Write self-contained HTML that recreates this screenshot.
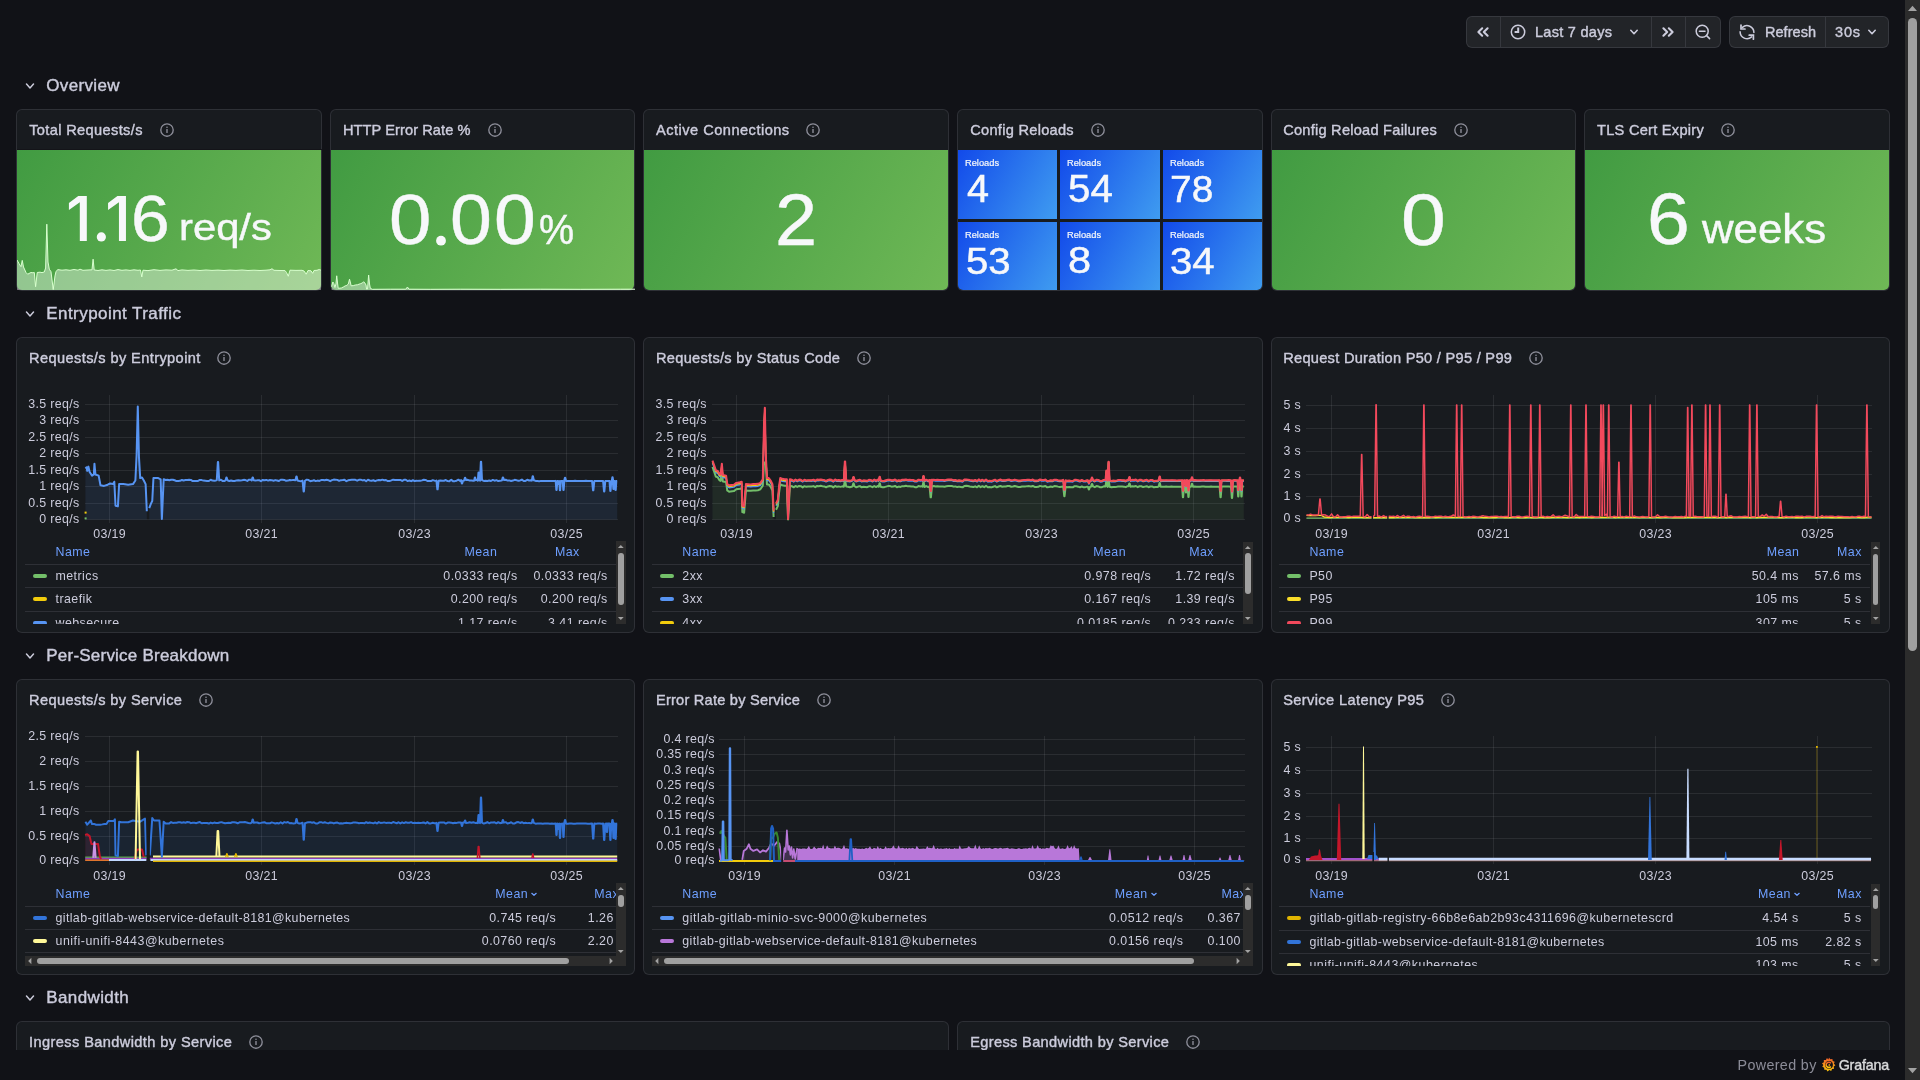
<!DOCTYPE html><html><head><meta charset="utf-8"><title>Traefik - Grafana</title><style>
*{margin:0;padding:0;box-sizing:border-box}
html,body{width:1920px;height:1080px;overflow:hidden;background:#111217}
body{position:relative;font-family:"Liberation Sans",sans-serif;color:#ccccdc}
.a{position:absolute;display:block}
.t{position:absolute;white-space:pre;line-height:1;font-family:"Liberation Sans",sans-serif;color:#ccccdc}
.md{-webkit-text-stroke:0.4px currentColor}
.pb{background:#181b1f;border:1px solid rgba(204,204,220,0.12);border-radius:6px}
.tb{background:#222428;border:1px solid rgba(204,204,220,0.12);border-radius:6px}
#dash{position:absolute;left:0;top:0;width:1905px;height:1050px;overflow:hidden;will-change:transform}
#foot{position:absolute;left:0;top:1050px;width:1905px;height:30px;will-change:transform}
</style></head><body><div id="dash"><div class="a tb" style="left:1466px;top:16px;width:255px;height:32px"></div><div class="a" style="left:1500.00px;top:17.00px;width:1.00px;height:30.00px;background:rgba(204,204,220,0.12);"></div><div class="a" style="left:1651.00px;top:17.00px;width:1.00px;height:30.00px;background:rgba(204,204,220,0.12);"></div><div class="a" style="left:1685.00px;top:17.00px;width:1.00px;height:30.00px;background:rgba(204,204,220,0.12);"></div><div class="a tb" style="left:1729px;top:16px;width:160px;height:32px"></div><div class="a" style="left:1825.00px;top:17.00px;width:1.00px;height:30.00px;background:rgba(204,204,220,0.12);"></div><svg class="a" style="left:1475.00px;top:24.00px;" width="16" height="16" viewBox="0 0 16 16"><polyline points="7.2,4.3 3.4,8 7.2,11.7" fill="none" stroke="#ccccdc" stroke-width="2.1" stroke-linecap="round" stroke-linejoin="round"/><polyline points="12.6,4.3 8.8,8 12.6,11.7" fill="none" stroke="#ccccdc" stroke-width="2.1" stroke-linecap="round" stroke-linejoin="round"/></svg><svg class="a" style="left:1509.80px;top:24.00px;" width="16" height="16" viewBox="0 0 16 16"><circle cx="8" cy="8" r="6.7" fill="none" stroke="#ccccdc" stroke-width="1.5"/><polyline points="8.2,4.6 8.2,8.1 5.6,8.1" fill="none" stroke="#ccccdc" stroke-width="2.0" stroke-linecap="square" stroke-linejoin="miter"/></svg><div class="t md" style="left:1535.00px;top:24.75px;font-size:14.5px;letter-spacing:0.285px;">Last 7 days</div><svg class="a" style="left:1626.00px;top:23.90px;" width="16" height="16" viewBox="0 0 16 16"><polyline points="4.8,6.3 8,9.7 11.2,6.3" fill="none" stroke="#ccccdc" stroke-width="1.6" stroke-linecap="round" stroke-linejoin="round"/></svg><svg class="a" style="left:1660.00px;top:24.00px;" width="16" height="16" viewBox="0 0 16 16"><polyline points="3.4,4.3 7.2,8 3.4,11.7" fill="none" stroke="#ccccdc" stroke-width="2.1" stroke-linecap="round" stroke-linejoin="round"/><polyline points="8.8,4.3 12.6,8 8.8,11.7" fill="none" stroke="#ccccdc" stroke-width="2.1" stroke-linecap="round" stroke-linejoin="round"/></svg><svg class="a" style="left:1694.50px;top:24.00px;" width="16" height="16" viewBox="0 0 16 16"><circle cx="7.2" cy="7.2" r="6.0" fill="none" stroke="#ccccdc" stroke-width="1.5"/><line x1="4.4" y1="7.2" x2="10.0" y2="7.2" stroke="#ccccdc" stroke-width="1.5" stroke-linecap="round"/><line x1="11.6" y1="11.6" x2="14.6" y2="14.6" stroke="#ccccdc" stroke-width="1.5" stroke-linecap="round"/></svg><svg class="a" style="left:1739.00px;top:24.00px;" width="16" height="16" viewBox="0 0 16 16"><path d="M3.4,3.4 A6.9,6.9 0 0 1 14.9,8.4" fill="none" stroke="#ccccdc" stroke-width="1.5" stroke-linecap="round"/><path d="M1.1,7.8 A6.9,6.9 0 0 0 12.6,12.9" fill="none" stroke="#ccccdc" stroke-width="1.5" stroke-linecap="round"/><polyline points="2.0,1.0 2.0,5.0 6.0,5.0" fill="none" stroke="#ccccdc" stroke-width="1.7" stroke-linecap="round" stroke-linejoin="miter"/><polyline points="10.2,11.2 14.4,11.2 14.4,15.2" fill="none" stroke="#ccccdc" stroke-width="1.7" stroke-linecap="round" stroke-linejoin="miter"/></svg><div class="t md" style="left:1765.00px;top:24.75px;font-size:14.5px;letter-spacing:0.039px;">Refresh</div><div class="t md" style="left:1835.00px;top:24.75px;font-size:14.5px;letter-spacing:0.813px;">30s</div><svg class="a" style="left:1864.00px;top:23.90px;" width="16" height="16" viewBox="0 0 16 16"><polyline points="4.8,6.3 8,9.7 11.2,6.3" fill="none" stroke="#ccccdc" stroke-width="1.6" stroke-linecap="round" stroke-linejoin="round"/></svg><svg class="a" style="left:22.00px;top:78.00px;" width="16" height="16" viewBox="0 0 16 16"><polyline points="4.5,6.1 8,9.9 11.5,6.1" fill="none" stroke="#ccccdc" stroke-width="1.5" stroke-linecap="round" stroke-linejoin="round"/></svg><div class="t md" style="left:46.25px;top:77.00px;font-size:17px;letter-spacing:0.337px;">Overview</div><div class="a pb" style="left:16.00px;top:109.00px;width:305.67px;height:182.00px"></div><div class="a pb" style="left:329.67px;top:109.00px;width:305.67px;height:182.00px"></div><div class="a pb" style="left:643.33px;top:109.00px;width:305.67px;height:182.00px"></div><div class="a pb" style="left:957.00px;top:109.00px;width:305.67px;height:182.00px"></div><div class="a pb" style="left:1270.67px;top:109.00px;width:305.67px;height:182.00px"></div><div class="a pb" style="left:1584.33px;top:109.00px;width:305.67px;height:182.00px"></div><div class="a" style="left:17.00px;top:150px;width:303.67px;height:140px;background:linear-gradient(120deg, #419b42, #6fb856);border-radius:0 0 5px 5px;overflow:hidden"></div><div class="a" style="left:330.67px;top:150px;width:303.67px;height:140px;background:linear-gradient(120deg, #419b42, #6fb856);border-radius:0 0 5px 5px;overflow:hidden"></div><div class="a" style="left:644.33px;top:150px;width:303.67px;height:140px;background:linear-gradient(120deg, #419b42, #6fb856);border-radius:0 0 5px 5px;overflow:hidden"></div><div class="a" style="left:1271.67px;top:150px;width:303.67px;height:140px;background:linear-gradient(120deg, #419b42, #6fb856);border-radius:0 0 5px 5px;overflow:hidden"></div><div class="a" style="left:1585.33px;top:150px;width:303.67px;height:140px;background:linear-gradient(120deg, #419b42, #6fb856);border-radius:0 0 5px 5px;overflow:hidden"></div><div class="a" style="left:17.00px;top:149.00px;width:304.67px;height:1.00px;background:#141419;"></div><svg class="a" style="left:17.00px;top:215.00px;" width="304.67" height="75" viewBox="0 0 304.67 75"><path d="M0.00,45.00 L2.00,48.50 L4.00,51.70 L5.25,45.40 L6.50,52.00 L9.00,57.50 L10.70,59.20 L12.00,58.50 L14.00,57.50 L16.00,57.80 L17.30,57.50 L18.60,71.70 L20.25,57.50 L23.00,57.20 L25.00,57.60 L27.30,57.00 L28.60,53.00 L29.80,9.20 L31.00,47.00 L32.30,54.20 L34.00,56.70 L36.25,74.60 L38.00,61.00 L39.00,56.70 L40.70,54.60 L45.00,55.20 L49.00,54.80 L53.00,55.30 L57.00,54.50 L61.00,55.20 L63.00,54.20 L66.00,55.30 L71.00,55.00 L75.00,54.80 L76.10,44.20 L77.20,55.00 L81.00,55.50 L85.00,54.80 L89.00,55.40 L93.00,54.90 L97.00,55.50 L101.00,54.60 L105.00,55.30 L109.00,54.90 L113.00,55.40 L117.00,54.80 L121.00,55.30 L123.50,55.00 L124.80,62.00 L126.00,55.20 L131.00,55.60 L137.00,54.70 L143.00,55.40 L149.00,54.90 L155.00,55.20 L159.00,53.80 L161.00,55.60 L165.00,54.90 L171.00,55.40 L177.00,55.00 L183.00,55.50 L189.00,55.00 L195.00,55.40 L201.00,55.10 L207.00,55.50 L213.00,55.10 L219.00,55.40 L225.00,55.00 L231.00,55.50 L237.00,55.20 L243.00,55.50 L249.00,55.20 L253.00,54.80 L255.00,53.75 L257.00,55.30 L263.00,55.50 L268.00,55.60 L269.50,57.50 L271.30,61.25 L273.00,55.20 L279.00,55.40 L285.00,55.30 L287.00,56.00 L289.25,59.20 L291.00,55.50 L294.00,55.80 L295.70,58.30 L297.00,55.50 L300.00,55.30 L302.20,54.50 L304.00,55.20 L304.00,75 L0.00,75 Z" fill="rgba(255,255,255,0.4)"/><path d="M0.00,45.00 L2.00,48.50 L4.00,51.70 L5.25,45.40 L6.50,52.00 L9.00,57.50 L10.70,59.20 L12.00,58.50 L14.00,57.50 L16.00,57.80 L17.30,57.50 L18.60,71.70 L20.25,57.50 L23.00,57.20 L25.00,57.60 L27.30,57.00 L28.60,53.00 L29.80,9.20 L31.00,47.00 L32.30,54.20 L34.00,56.70 L36.25,74.60 L38.00,61.00 L39.00,56.70 L40.70,54.60 L45.00,55.20 L49.00,54.80 L53.00,55.30 L57.00,54.50 L61.00,55.20 L63.00,54.20 L66.00,55.30 L71.00,55.00 L75.00,54.80 L76.10,44.20 L77.20,55.00 L81.00,55.50 L85.00,54.80 L89.00,55.40 L93.00,54.90 L97.00,55.50 L101.00,54.60 L105.00,55.30 L109.00,54.90 L113.00,55.40 L117.00,54.80 L121.00,55.30 L123.50,55.00 L124.80,62.00 L126.00,55.20 L131.00,55.60 L137.00,54.70 L143.00,55.40 L149.00,54.90 L155.00,55.20 L159.00,53.80 L161.00,55.60 L165.00,54.90 L171.00,55.40 L177.00,55.00 L183.00,55.50 L189.00,55.00 L195.00,55.40 L201.00,55.10 L207.00,55.50 L213.00,55.10 L219.00,55.40 L225.00,55.00 L231.00,55.50 L237.00,55.20 L243.00,55.50 L249.00,55.20 L253.00,54.80 L255.00,53.75 L257.00,55.30 L263.00,55.50 L268.00,55.60 L269.50,57.50 L271.30,61.25 L273.00,55.20 L279.00,55.40 L285.00,55.30 L287.00,56.00 L289.25,59.20 L291.00,55.50 L294.00,55.80 L295.70,58.30 L297.00,55.50 L300.00,55.30 L302.20,54.50 L304.00,55.20" fill="none" stroke="#d9ffcf" stroke-width="1" stroke-linejoin="round"/></svg><svg class="a" style="left:330.67px;top:260.00px;" width="304.67" height="30" viewBox="0 0 304.67 30"><path d="M0.58,26.70 L1.83,22.00 L2.83,23.50 L3.93,27.50 L4.93,24.00 L5.73,15.80 L6.53,23.00 L7.23,28.30 L10.33,28.00 L12.33,27.00 L14.33,25.80 L15.83,25.40 L17.33,24.00 L18.53,19.20 L19.53,23.00 L20.13,25.80 L22.33,25.60 L24.33,25.00 L26.33,24.80 L29.33,23.75 L31.33,23.00 L32.63,21.70 L33.83,23.00 L35.03,25.00 L35.58,29.20 L36.53,29.00 L37.63,15.00 L38.53,24.00 L39.33,28.30 L41.33,29.30 L59.33,29.20 L74.83,29.20 L76.43,27.00 L78.03,29.20 L99.33,29.30 L129.33,29.20 L169.33,29.30 L209.33,29.20 L249.33,29.30 L289.33,29.20 L304.33,29.20 L304.33,30 L0.58,30 Z" fill="rgba(255,255,255,0.4)"/><path d="M0.58,26.70 L1.83,22.00 L2.83,23.50 L3.93,27.50 L4.93,24.00 L5.73,15.80 L6.53,23.00 L7.23,28.30 L10.33,28.00 L12.33,27.00 L14.33,25.80 L15.83,25.40 L17.33,24.00 L18.53,19.20 L19.53,23.00 L20.13,25.80 L22.33,25.60 L24.33,25.00 L26.33,24.80 L29.33,23.75 L31.33,23.00 L32.63,21.70 L33.83,23.00 L35.03,25.00 L35.58,29.20 L36.53,29.00 L37.63,15.00 L38.53,24.00 L39.33,28.30 L41.33,29.30 L59.33,29.20 L74.83,29.20 L76.43,27.00 L78.03,29.20 L99.33,29.30 L129.33,29.20 L169.33,29.30 L209.33,29.20 L249.33,29.30 L289.33,29.20 L304.33,29.20" fill="none" stroke="#d9ffcf" stroke-width="1" stroke-linejoin="round"/></svg><div class="t md" style="left:29.20px;top:122.70px;font-size:14.6px;letter-spacing:0.357px;">Total Requests/s</div><svg class="a" style="left:159.00px;top:121.80px;" width="16" height="16" viewBox="0 0 16 16"><circle cx="8" cy="8" r="6.2" fill="none" stroke="rgba(204,204,220,0.65)" stroke-width="1.35"/><rect x="7.3" y="7.0" width="1.4" height="4.0" rx="0.6" fill="rgba(204,204,220,0.65)"/><circle cx="8" cy="5.2" r="0.8" fill="rgba(204,204,220,0.65)"/></svg><div class="t md" style="left:343.00px;top:122.70px;font-size:14.6px;letter-spacing:0.076px;">HTTP Error Rate %</div><svg class="a" style="left:487.00px;top:121.80px;" width="16" height="16" viewBox="0 0 16 16"><circle cx="8" cy="8" r="6.2" fill="none" stroke="rgba(204,204,220,0.65)" stroke-width="1.35"/><rect x="7.3" y="7.0" width="1.4" height="4.0" rx="0.6" fill="rgba(204,204,220,0.65)"/><circle cx="8" cy="5.2" r="0.8" fill="rgba(204,204,220,0.65)"/></svg><div class="t md" style="left:656.00px;top:122.70px;font-size:14.6px;letter-spacing:0.484px;">Active Connections</div><svg class="a" style="left:805.00px;top:121.80px;" width="16" height="16" viewBox="0 0 16 16"><circle cx="8" cy="8" r="6.2" fill="none" stroke="rgba(204,204,220,0.65)" stroke-width="1.35"/><rect x="7.3" y="7.0" width="1.4" height="4.0" rx="0.6" fill="rgba(204,204,220,0.65)"/><circle cx="8" cy="5.2" r="0.8" fill="rgba(204,204,220,0.65)"/></svg><div class="t md" style="left:970.20px;top:122.70px;font-size:14.6px;letter-spacing:0.283px;">Config Reloads</div><svg class="a" style="left:1090.00px;top:121.80px;" width="16" height="16" viewBox="0 0 16 16"><circle cx="8" cy="8" r="6.2" fill="none" stroke="rgba(204,204,220,0.65)" stroke-width="1.35"/><rect x="7.3" y="7.0" width="1.4" height="4.0" rx="0.6" fill="rgba(204,204,220,0.65)"/><circle cx="8" cy="5.2" r="0.8" fill="rgba(204,204,220,0.65)"/></svg><div class="t md" style="left:1283.20px;top:122.70px;font-size:14.6px;letter-spacing:0.242px;">Config Reload Failures</div><svg class="a" style="left:1453.00px;top:121.80px;" width="16" height="16" viewBox="0 0 16 16"><circle cx="8" cy="8" r="6.2" fill="none" stroke="rgba(204,204,220,0.65)" stroke-width="1.35"/><rect x="7.3" y="7.0" width="1.4" height="4.0" rx="0.6" fill="rgba(204,204,220,0.65)"/><circle cx="8" cy="5.2" r="0.8" fill="rgba(204,204,220,0.65)"/></svg><div class="t md" style="left:1597.00px;top:122.70px;font-size:14.6px;letter-spacing:0.269px;">TLS Cert Expiry</div><svg class="a" style="left:1720.00px;top:121.80px;" width="16" height="16" viewBox="0 0 16 16"><circle cx="8" cy="8" r="6.2" fill="none" stroke="rgba(204,204,220,0.65)" stroke-width="1.35"/><rect x="7.3" y="7.0" width="1.4" height="4.0" rx="0.6" fill="rgba(204,204,220,0.65)"/><circle cx="8" cy="5.2" r="0.8" fill="rgba(204,204,220,0.65)"/></svg><svg class="a" style="left:64.00px;top:190.00px;" width="70" height="56" viewBox="0 0 70 56"><polygon points="14.260000000000005,5.960000000000008 22.810000000000002,5.960000000000008 22.810000000000002,51.06 15.810000000000002,51.06 15.810000000000002,12.180000000000007 4.920000000000002,19.960000000000008 4.920000000000002,12.960000000000008" fill="#f7f8fa"/><polygon points="53.400000000000006,5.960000000000008 61.95,5.960000000000008 61.95,51.06 54.95,51.06 54.95,12.180000000000007 44.06,19.960000000000008 44.06,12.960000000000008" fill="#f7f8fa"/><circle cx="37.33" cy="46.9" r="4.6" fill="#f7f8fa"/></svg><div class="t" style="left:130.97px;top:185.82px;font-size:65.35px;color:#f7f8fa;transform:scaleX(1.0639);transform-origin:0 0;-webkit-text-stroke:0.45px #f7f8fa;">6</div><div class="t" style="left:178.93px;top:208.53px;font-size:37.22px;color:#f7f8fa;transform:scaleX(1.1221);transform-origin:0 0;-webkit-text-stroke:0.45px #f7f8fa;">req/s</div><div class="t" style="left:389.35px;top:185.19px;font-size:70.42px;color:#f7f8fa;transform:scaleX(1.0815);transform-origin:0 0;-webkit-text-stroke:0.45px #f7f8fa;">0</div><div class="t" style="left:450.28px;top:185.19px;font-size:70.42px;color:#f7f8fa;transform:scaleX(1.0682);transform-origin:0 0;-webkit-text-stroke:0.45px #f7f8fa;">0</div><div class="t" style="left:494.09px;top:185.19px;font-size:70.42px;color:#f7f8fa;transform:scaleX(1.0652);transform-origin:0 0;-webkit-text-stroke:0.45px #f7f8fa;">0</div><svg class="a" style="left:430.00px;top:230.00px;" width="20" height="20" viewBox="0 0 20 20"><circle cx="11" cy="10.7" r="4.9" fill="#f7f8fa"/></svg><div class="t" style="left:539.30px;top:208.33px;font-size:43.26px;color:#f7f8fa;transform:scaleX(0.9127);transform-origin:0 0;-webkit-text-stroke:0.45px #f7f8fa;">%</div><div class="t" style="left:775.40px;top:184.36px;font-size:72.71px;color:#f7f8fa;transform:scaleX(1.0408);transform-origin:0 0;-webkit-text-stroke:0.45px #f7f8fa;">2</div><div class="t" style="left:1400.58px;top:183.98px;font-size:72.54px;color:#f7f8fa;transform:scaleX(1.1091);transform-origin:0 0;-webkit-text-stroke:0.45px #f7f8fa;">0</div><div class="t" style="left:1646.70px;top:183.04px;font-size:72.11px;color:#f7f8fa;transform:scaleX(1.0663);transform-origin:0 0;-webkit-text-stroke:0.45px #f7f8fa;">6</div><div class="t" style="left:1702.25px;top:208.84px;font-size:41.36px;color:#f7f8fa;transform:scaleX(1.0586);transform-origin:0 0;-webkit-text-stroke:0.45px #f7f8fa;">weeks</div><div class="a" style="left:958.00px;top:150.00px;width:99.00px;height:69.00px;background:linear-gradient(120deg, #124aea, #3f9cf0);"></div><div class="t" style="left:965.24px;top:157.61px;font-size:9.89px;color:#f7f8fa;transform:scaleX(0.9392);transform-origin:0 0;-webkit-text-stroke:0.2px #f7f8fa;">Reloads</div><div class="t" style="left:966.70px;top:170.05px;font-size:38.39px;color:#f7f8fa;transform:scaleX(1.0324);transform-origin:0 0;-webkit-text-stroke:0.5px #f7f8fa;">4</div><div class="a" style="left:1060.20px;top:150.00px;width:99.60px;height:69.00px;background:linear-gradient(120deg, #124aea, #3f9cf0);"></div><div class="t" style="left:1067.44px;top:157.61px;font-size:9.89px;color:#f7f8fa;transform:scaleX(0.9392);transform-origin:0 0;-webkit-text-stroke:0.2px #f7f8fa;">Reloads</div><div class="t" style="left:1068.34px;top:170.11px;font-size:38.00px;color:#f7f8fa;transform:scaleX(1.0606);transform-origin:0 0;-webkit-text-stroke:0.5px #f7f8fa;">54</div><div class="a" style="left:1163.00px;top:150.00px;width:99.00px;height:69.00px;background:linear-gradient(120deg, #124aea, #3f9cf0);"></div><div class="t" style="left:1170.24px;top:157.61px;font-size:9.89px;color:#f7f8fa;transform:scaleX(0.9392);transform-origin:0 0;-webkit-text-stroke:0.2px #f7f8fa;">Reloads</div><div class="t" style="left:1169.91px;top:170.64px;font-size:37.38px;color:#f7f8fa;transform:scaleX(1.0406);transform-origin:0 0;-webkit-text-stroke:0.5px #f7f8fa;">78</div><div class="a" style="left:958.00px;top:222.00px;width:99.00px;height:68.00px;background:linear-gradient(120deg, #124aea, #3f9cf0);border-radius:0 0 0 5px;"></div><div class="t" style="left:965.24px;top:229.61px;font-size:9.89px;color:#f7f8fa;transform:scaleX(0.9392);transform-origin:0 0;-webkit-text-stroke:0.2px #f7f8fa;">Reloads</div><div class="t" style="left:965.94px;top:242.73px;font-size:37.04px;color:#f7f8fa;transform:scaleX(1.0854);transform-origin:0 0;-webkit-text-stroke:0.5px #f7f8fa;">53</div><div class="a" style="left:1060.20px;top:222.00px;width:99.60px;height:68.00px;background:linear-gradient(120deg, #124aea, #3f9cf0);"></div><div class="t" style="left:1067.44px;top:229.61px;font-size:9.89px;color:#f7f8fa;transform:scaleX(0.9392);transform-origin:0 0;-webkit-text-stroke:0.2px #f7f8fa;">Reloads</div><div class="t" style="left:1067.60px;top:242.80px;font-size:36.96px;color:#f7f8fa;transform:scaleX(1.1232);transform-origin:0 0;-webkit-text-stroke:0.5px #f7f8fa;">8</div><div class="a" style="left:1163.00px;top:222.00px;width:99.00px;height:68.00px;background:linear-gradient(120deg, #124aea, #3f9cf0);border-radius:0 0 5px 0;"></div><div class="t" style="left:1170.24px;top:229.61px;font-size:9.89px;color:#f7f8fa;transform:scaleX(0.9392);transform-origin:0 0;-webkit-text-stroke:0.2px #f7f8fa;">Reloads</div><div class="t" style="left:1170.44px;top:242.73px;font-size:37.04px;color:#f7f8fa;transform:scaleX(1.0830);transform-origin:0 0;-webkit-text-stroke:0.5px #f7f8fa;">34</div><svg class="a" style="left:22.00px;top:306.00px;" width="16" height="16" viewBox="0 0 16 16"><polyline points="4.5,6.1 8,9.9 11.5,6.1" fill="none" stroke="#ccccdc" stroke-width="1.5" stroke-linecap="round" stroke-linejoin="round"/></svg><div class="t md" style="left:46.25px;top:305.00px;font-size:17px;letter-spacing:0.441px;">Entrypoint Traffic</div><svg class="a" style="left:22.00px;top:648.00px;" width="16" height="16" viewBox="0 0 16 16"><polyline points="4.5,6.1 8,9.9 11.5,6.1" fill="none" stroke="#ccccdc" stroke-width="1.5" stroke-linecap="round" stroke-linejoin="round"/></svg><div class="t md" style="left:46.25px;top:647.00px;font-size:17px;letter-spacing:0.224px;">Per-Service Breakdown</div><svg class="a" style="left:22.00px;top:990.00px;" width="16" height="16" viewBox="0 0 16 16"><polyline points="4.5,6.1 8,9.9 11.5,6.1" fill="none" stroke="#ccccdc" stroke-width="1.5" stroke-linecap="round" stroke-linejoin="round"/></svg><div class="t md" style="left:46.25px;top:989.00px;font-size:17px;letter-spacing:0.389px;">Bandwidth</div><div class="a pb" style="left:16.00px;top:337.00px;width:619.33px;height:296.00px"></div><div class="a pb" style="left:643.33px;top:337.00px;width:619.33px;height:296.00px"></div><div class="a pb" style="left:1270.67px;top:337.00px;width:619.33px;height:296.00px"></div><div class="a pb" style="left:16.00px;top:679.00px;width:619.33px;height:296.00px"></div><div class="a pb" style="left:643.33px;top:679.00px;width:619.33px;height:296.00px"></div><div class="a pb" style="left:1270.67px;top:679.00px;width:619.33px;height:296.00px"></div><div class="a pb" style="left:16.00px;top:1021.00px;width:933.00px;height:296.00px"></div><div class="a pb" style="left:957.00px;top:1021.00px;width:933.00px;height:296.00px"></div><div class="a" style="left:85.20px;top:519.00px;width:533.00px;height:1.00px;background:rgba(204,204,220,0.1);"></div><div class="a" style="left:85.20px;top:503.00px;width:533.00px;height:1.00px;background:rgba(204,204,220,0.1);"></div><div class="a" style="left:85.20px;top:486.00px;width:533.00px;height:1.00px;background:rgba(204,204,220,0.1);"></div><div class="a" style="left:85.20px;top:470.00px;width:533.00px;height:1.00px;background:rgba(204,204,220,0.1);"></div><div class="a" style="left:85.20px;top:453.00px;width:533.00px;height:1.00px;background:rgba(204,204,220,0.1);"></div><div class="a" style="left:85.20px;top:437.00px;width:533.00px;height:1.00px;background:rgba(204,204,220,0.1);"></div><div class="a" style="left:85.20px;top:420.00px;width:533.00px;height:1.00px;background:rgba(204,204,220,0.1);"></div><div class="a" style="left:85.20px;top:404.00px;width:533.00px;height:1.00px;background:rgba(204,204,220,0.1);"></div><div class="a" style="left:109.00px;top:394.70px;width:1.00px;height:128.30px;background:rgba(204,204,220,0.1);"></div><div class="a" style="left:261.00px;top:394.70px;width:1.00px;height:128.30px;background:rgba(204,204,220,0.1);"></div><div class="a" style="left:414.00px;top:394.70px;width:1.00px;height:128.30px;background:rgba(204,204,220,0.1);"></div><div class="a" style="left:566.00px;top:394.70px;width:1.00px;height:128.30px;background:rgba(204,204,220,0.1);"></div><div class="t" style="left:39.29px;top:512.80px;font-size:12.4px;letter-spacing:0.350px;">0 req/s</div><div class="t" style="left:28.25px;top:496.80px;font-size:12.4px;letter-spacing:0.350px;">0.5 req/s</div><div class="t" style="left:39.29px;top:479.80px;font-size:12.4px;letter-spacing:0.350px;">1 req/s</div><div class="t" style="left:28.25px;top:463.80px;font-size:12.4px;letter-spacing:0.350px;">1.5 req/s</div><div class="t" style="left:39.29px;top:446.80px;font-size:12.4px;letter-spacing:0.350px;">2 req/s</div><div class="t" style="left:28.25px;top:430.80px;font-size:12.4px;letter-spacing:0.350px;">2.5 req/s</div><div class="t" style="left:39.29px;top:413.80px;font-size:12.4px;letter-spacing:0.350px;">3 req/s</div><div class="t" style="left:28.25px;top:397.80px;font-size:12.4px;letter-spacing:0.350px;">3.5 req/s</div><div class="t" style="left:93.29px;top:528.00px;font-size:12.4px;letter-spacing:0.350px;">03/19</div><div class="t" style="left:245.29px;top:528.00px;font-size:12.4px;letter-spacing:0.350px;">03/21</div><div class="t" style="left:398.29px;top:528.00px;font-size:12.4px;letter-spacing:0.350px;">03/23</div><div class="t" style="left:550.29px;top:528.00px;font-size:12.4px;letter-spacing:0.350px;">03/25</div><svg class="a" style="left:80.00px;top:390.00px;" width="545.00" height="135.00" viewBox="80.00 390.00 545.00 135.00"><path d="M85.42,468.44 L86.62,467.24 L87.22,470.85 L88.43,466.63 L89.63,472.05 L92.04,475.66 L93.85,474.46 L94.45,463.63 L95.41,474.46 L98.66,475.66 L100.47,485.30 L104.08,485.90 L107.69,484.69 L110.10,483.49 L113.11,484.09 L114.31,481.68 L115.52,505.76 L117.92,506.37 L119.13,484.09 L123.34,484.09 L128.16,484.69 L132.97,484.09 L135.38,480.48 L136.59,455.20 L137.79,406.44 L138.99,457.61 L140.20,478.07 L142.00,477.47 L143.81,480.48 L145.62,484.09 L146.82,511.18 L146.82,519.40 L85.42,519.40 Z" fill="#5794F2" fill-opacity="0.1"/><path d="M149.23,508.17 L151.03,503.36 L152.24,500.95 L153.44,478.07 L158.26,478.07 L160.66,479.28 L161.87,519.01 L163.67,479.28 L165.67,479.98 L167.47,479.77 L169.27,480.23 L171.07,479.85 L172.87,479.71 L174.67,480.24 L176.47,481.07 L178.27,480.88 L180.07,480.82 L181.87,479.96 L183.67,480.46 L185.47,480.04 L187.27,479.88 L189.07,479.77 L190.87,479.94 L192.67,481.08 L194.47,480.93 L196.27,480.89 L198.07,480.88 L199.87,479.91 L201.67,480.10 L203.47,480.60 L205.27,480.77 L207.07,480.97 L208.87,481.01 L210.67,479.74 L212.47,480.57 L214.27,480.67 L216.07,480.41 L216.80,480.14 L217.85,462.00 L218.15,462.00 L219.20,480.38 L221.00,479.74 L222.80,481.10 L224.60,480.98 L225.50,480.44 L226.35,477.50 L226.65,477.50 L227.50,480.24 L229.30,481.05 L231.10,480.52 L232.90,481.01 L234.70,480.96 L236.50,480.41 L238.30,480.26 L240.10,480.56 L241.90,480.29 L243.70,479.86 L245.50,480.09 L247.30,480.90 L249.10,479.67 L250.90,479.67 L251.70,480.50 L252.55,477.40 L252.85,477.40 L253.70,480.22 L255.50,480.46 L257.30,480.35 L259.10,480.15 L260.90,481.20 L262.70,479.91 L264.50,480.26 L266.30,479.92 L268.10,480.61 L269.90,480.04 L271.70,480.17 L273.50,480.80 L275.30,480.11 L277.10,480.49 L278.90,481.05 L280.70,479.76 L282.50,479.70 L284.30,479.97 L286.10,480.82 L287.90,480.58 L289.70,479.98 L291.50,480.13 L293.30,479.88 L295.10,480.33 L295.50,480.03 L296.35,476.50 L296.65,476.50 L297.50,480.56 L299.30,481.03 L301.10,481.13 L302.55,480.59 L303.60,491.50 L303.90,491.50 L304.95,480.77 L306.75,479.63 L308.55,480.06 L310.35,481.15 L312.15,480.84 L313.95,480.26 L315.75,481.11 L317.55,480.59 L319.35,480.91 L321.15,480.07 L322.95,479.91 L324.75,480.31 L326.55,479.82 L328.35,480.21 L330.15,481.14 L331.95,480.13 L333.75,479.62 L335.55,479.67 L337.35,479.87 L339.15,480.85 L340.95,480.18 L342.75,480.06 L344.55,479.76 L346.35,481.17 L348.15,480.28 L349.95,479.93 L351.75,479.69 L353.55,479.69 L355.35,479.87 L357.15,480.68 L358.95,479.84 L360.75,479.67 L362.55,480.39 L364.35,480.00 L366.15,481.20 L367.95,479.80 L369.75,480.45 L371.55,480.84 L373.35,480.25 L375.15,481.18 L376.95,480.36 L378.75,479.99 L380.55,480.26 L382.35,479.66 L384.15,480.27 L385.95,480.00 L387.75,481.02 L389.55,480.93 L391.35,480.40 L393.15,479.65 L394.95,480.01 L396.75,479.99 L398.55,479.93 L400.35,479.97 L402.15,480.99 L403.95,479.83 L405.75,479.68 L407.55,481.08 L409.35,480.50 L411.15,481.18 L412.95,480.24 L414.75,481.04 L416.55,480.65 L418.35,480.87 L420.15,480.79 L421.95,480.39 L423.75,479.75 L425.55,479.94 L427.35,481.00 L429.15,481.04 L430.95,481.08 L432.75,480.14 L434.55,480.65 L436.35,480.88 L436.40,480.51 L437.35,489.30 L437.65,489.30 L438.60,480.65 L440.40,480.44 L442.20,480.65 L444.00,480.70 L445.80,480.03 L447.60,481.08 L449.40,481.13 L451.20,479.72 L453.00,481.15 L454.80,481.14 L456.60,480.67 L458.40,479.67 L460.20,481.04 L461.00,480.10 L461.85,483.50 L462.15,483.50 L463.00,480.77 L464.10,480.53 L464.95,477.80 L465.25,477.80 L466.10,480.05 L467.90,479.87 L469.70,480.62 L471.50,480.51 L473.30,480.79 L474.10,480.74 L474.85,477.60 L475.15,477.60 L475.90,480.17 L477.70,479.61 L477.80,480.74 L478.45,472.60 L478.75,472.60 L479.40,480.01 L480.00,480.70 L480.85,461.70 L481.15,461.70 L482.00,480.09 L483.80,480.90 L485.60,480.85 L487.40,481.00 L489.20,480.48 L491.00,481.01 L492.80,479.92 L494.60,480.67 L496.40,480.13 L498.20,481.03 L500.00,480.84 L501.80,480.35 L501.90,480.42 L502.75,477.40 L503.05,477.40 L503.90,480.02 L505.70,479.65 L507.50,480.55 L509.30,480.38 L511.10,480.98 L512.90,480.57 L514.70,479.82 L516.50,480.18 L518.30,480.83 L520.10,480.44 L521.90,479.62 L523.70,480.94 L525.50,480.92 L527.30,479.74 L529.10,480.47 L530.90,480.21 L531.80,480.63 L532.65,476.25 L532.95,476.25 L533.80,480.25 L535.60,480.92 L537.40,481.00 L539.20,481.14 L541.00,480.88 L542.80,480.88 L544.60,481.04 L546.40,481.12 L548.20,481.00 L550.00,480.98 L551.80,481.11 L553.60,481.08 L555.40,480.87 L555.70,481.06 L556.35,490.00 L556.65,490.00 L557.30,480.95 L557.90,480.97 L558.45,484.00 L558.75,484.00 L559.30,481.05 L559.20,480.99 L559.85,490.30 L560.15,490.30 L560.80,481.04 L562.60,480.90 L562.70,481.06 L563.35,490.00 L563.65,490.00 L564.30,480.95 L564.10,480.95 L564.95,477.80 L565.25,477.80 L566.10,481.00 L567.90,480.95 L569.70,481.01 L571.50,481.12 L573.30,481.06 L575.10,480.85 L576.90,480.94 L578.70,481.01 L580.50,481.00 L582.30,481.06 L584.10,481.00 L585.90,480.87 L587.70,480.92 L589.50,481.10 L591.30,480.96 L592.10,481.04 L593.05,490.30 L593.35,490.30 L594.30,481.07 L596.10,481.04 L597.90,481.05 L599.70,481.03 L601.50,480.94 L603.10,481.06 L604.05,491.40 L604.35,491.40 L605.30,481.00 L607.10,481.12 L608.90,480.94 L609.50,481.06 L610.25,491.00 L610.55,491.00 L611.30,481.04 L611.80,481.02 L612.35,477.30 L612.65,477.30 L613.20,480.99 L612.80,480.95 L613.35,489.00 L613.65,489.00 L614.20,481.04 L614.90,480.98 L615.45,490.00 L615.75,490.00 L616.30,481.02 L617.20,481.00 L617.20,519.40 L149.23,519.40 Z" fill="#5794F2" fill-opacity="0.1"/><polyline points="85.42,468.44 86.62,467.24 87.22,470.85 88.43,466.63 89.63,472.05 92.04,475.66 93.85,474.46 94.45,463.63 95.41,474.46 98.66,475.66 100.47,485.30 104.08,485.90 107.69,484.69 110.10,483.49 113.11,484.09 114.31,481.68 115.52,505.76 117.92,506.37 119.13,484.09 123.34,484.09 128.16,484.69 132.97,484.09 135.38,480.48 136.59,455.20 137.79,406.44 138.99,457.61 140.20,478.07 142.00,477.47 143.81,480.48 145.62,484.09 146.82,511.18" fill="none" stroke="#5794F2" stroke-width="2.0" stroke-linejoin="round" stroke-opacity="1.0"/><polyline points="149.23,508.17 151.03,503.36 152.24,500.95 153.44,478.07 158.26,478.07 160.66,479.28 161.87,519.01 163.67,479.28 165.67,479.98 167.47,479.77 169.27,480.23 171.07,479.85 172.87,479.71 174.67,480.24 176.47,481.07 178.27,480.88 180.07,480.82 181.87,479.96 183.67,480.46 185.47,480.04 187.27,479.88 189.07,479.77 190.87,479.94 192.67,481.08 194.47,480.93 196.27,480.89 198.07,480.88 199.87,479.91 201.67,480.10 203.47,480.60 205.27,480.77 207.07,480.97 208.87,481.01 210.67,479.74 212.47,480.57 214.27,480.67 216.07,480.41 216.80,480.14 217.85,462.00 218.15,462.00 219.20,480.38 221.00,479.74 222.80,481.10 224.60,480.98 225.50,480.44 226.35,477.50 226.65,477.50 227.50,480.24 229.30,481.05 231.10,480.52 232.90,481.01 234.70,480.96 236.50,480.41 238.30,480.26 240.10,480.56 241.90,480.29 243.70,479.86 245.50,480.09 247.30,480.90 249.10,479.67 250.90,479.67 251.70,480.50 252.55,477.40 252.85,477.40 253.70,480.22 255.50,480.46 257.30,480.35 259.10,480.15 260.90,481.20 262.70,479.91 264.50,480.26 266.30,479.92 268.10,480.61 269.90,480.04 271.70,480.17 273.50,480.80 275.30,480.11 277.10,480.49 278.90,481.05 280.70,479.76 282.50,479.70 284.30,479.97 286.10,480.82 287.90,480.58 289.70,479.98 291.50,480.13 293.30,479.88 295.10,480.33 295.50,480.03 296.35,476.50 296.65,476.50 297.50,480.56 299.30,481.03 301.10,481.13 302.55,480.59 303.60,491.50 303.90,491.50 304.95,480.77 306.75,479.63 308.55,480.06 310.35,481.15 312.15,480.84 313.95,480.26 315.75,481.11 317.55,480.59 319.35,480.91 321.15,480.07 322.95,479.91 324.75,480.31 326.55,479.82 328.35,480.21 330.15,481.14 331.95,480.13 333.75,479.62 335.55,479.67 337.35,479.87 339.15,480.85 340.95,480.18 342.75,480.06 344.55,479.76 346.35,481.17 348.15,480.28 349.95,479.93 351.75,479.69 353.55,479.69 355.35,479.87 357.15,480.68 358.95,479.84 360.75,479.67 362.55,480.39 364.35,480.00 366.15,481.20 367.95,479.80 369.75,480.45 371.55,480.84 373.35,480.25 375.15,481.18 376.95,480.36 378.75,479.99 380.55,480.26 382.35,479.66 384.15,480.27 385.95,480.00 387.75,481.02 389.55,480.93 391.35,480.40 393.15,479.65 394.95,480.01 396.75,479.99 398.55,479.93 400.35,479.97 402.15,480.99 403.95,479.83 405.75,479.68 407.55,481.08 409.35,480.50 411.15,481.18 412.95,480.24 414.75,481.04 416.55,480.65 418.35,480.87 420.15,480.79 421.95,480.39 423.75,479.75 425.55,479.94 427.35,481.00 429.15,481.04 430.95,481.08 432.75,480.14 434.55,480.65 436.35,480.88 436.40,480.51 437.35,489.30 437.65,489.30 438.60,480.65 440.40,480.44 442.20,480.65 444.00,480.70 445.80,480.03 447.60,481.08 449.40,481.13 451.20,479.72 453.00,481.15 454.80,481.14 456.60,480.67 458.40,479.67 460.20,481.04 461.00,480.10 461.85,483.50 462.15,483.50 463.00,480.77 464.10,480.53 464.95,477.80 465.25,477.80 466.10,480.05 467.90,479.87 469.70,480.62 471.50,480.51 473.30,480.79 474.10,480.74 474.85,477.60 475.15,477.60 475.90,480.17 477.70,479.61 477.80,480.74 478.45,472.60 478.75,472.60 479.40,480.01 480.00,480.70 480.85,461.70 481.15,461.70 482.00,480.09 483.80,480.90 485.60,480.85 487.40,481.00 489.20,480.48 491.00,481.01 492.80,479.92 494.60,480.67 496.40,480.13 498.20,481.03 500.00,480.84 501.80,480.35 501.90,480.42 502.75,477.40 503.05,477.40 503.90,480.02 505.70,479.65 507.50,480.55 509.30,480.38 511.10,480.98 512.90,480.57 514.70,479.82 516.50,480.18 518.30,480.83 520.10,480.44 521.90,479.62 523.70,480.94 525.50,480.92 527.30,479.74 529.10,480.47 530.90,480.21 531.80,480.63 532.65,476.25 532.95,476.25 533.80,480.25 535.60,480.92 537.40,481.00 539.20,481.14 541.00,480.88 542.80,480.88 544.60,481.04 546.40,481.12 548.20,481.00 550.00,480.98 551.80,481.11 553.60,481.08 555.40,480.87 555.70,481.06 556.35,490.00 556.65,490.00 557.30,480.95 557.90,480.97 558.45,484.00 558.75,484.00 559.30,481.05 559.20,480.99 559.85,490.30 560.15,490.30 560.80,481.04 562.60,480.90 562.70,481.06 563.35,490.00 563.65,490.00 564.30,480.95 564.10,480.95 564.95,477.80 565.25,477.80 566.10,481.00 567.90,480.95 569.70,481.01 571.50,481.12 573.30,481.06 575.10,480.85 576.90,480.94 578.70,481.01 580.50,481.00 582.30,481.06 584.10,481.00 585.90,480.87 587.70,480.92 589.50,481.10 591.30,480.96 592.10,481.04 593.05,490.30 593.35,490.30 594.30,481.07 596.10,481.04 597.90,481.05 599.70,481.03 601.50,480.94 603.10,481.06 604.05,491.40 604.35,491.40 605.30,481.00 607.10,481.12 608.90,480.94 609.50,481.06 610.25,491.00 610.55,491.00 611.30,481.04 611.80,481.02 612.35,477.30 612.65,477.30 613.20,480.99 612.80,480.95 613.35,489.00 613.65,489.00 614.20,481.04 614.90,480.98 615.45,490.00 615.75,490.00 616.30,481.02 617.20,481.00" fill="none" stroke="#5794F2" stroke-width="2.0" stroke-linejoin="round" stroke-opacity="1.0"/><rect x="84.6" y="511.6" width="2" height="2" fill="#F2CC0C"/><rect x="84.6" y="517.4" width="2" height="2" fill="#73BF69"/></svg><div class="a" style="left:17.00px;top:540.00px;width:599.00px;height:84.00px;overflow:hidden"><div class="t" style="left:38.50px;top:5.80px;font-size:12.4px;letter-spacing:0.450px;color:#6e9fff;">Name</div><div class="t" style="left:447.44px;top:5.80px;font-size:12.4px;letter-spacing:0.450px;color:#6e9fff;">Mean</div><div class="t" style="left:537.98px;top:5.80px;font-size:12.4px;letter-spacing:0.450px;color:#6e9fff;">Max</div><div class="a" style="left:8.20px;top:23.50px;width:590.80px;height:1.00px;background:rgba(204,204,220,0.12);"></div><div class="a" style="left:15.80px;top:33.80px;width:14.20px;height:4.00px;background:#73BF69;border-radius:2px;"></div><div class="t" style="left:38.50px;top:29.60px;font-size:12.4px;letter-spacing:0.450px;">metrics</div><div class="t" style="left:426.31px;top:29.60px;font-size:12.4px;letter-spacing:0.450px;">0.0333 req/s</div><div class="t" style="left:516.41px;top:29.60px;font-size:12.4px;letter-spacing:0.450px;">0.0333 req/s</div><div class="a" style="left:8.20px;top:47.00px;width:590.80px;height:1.00px;background:rgba(204,204,220,0.12);"></div><div class="a" style="left:15.80px;top:57.30px;width:14.20px;height:4.00px;background:#F2CC0C;border-radius:2px;"></div><div class="t" style="left:38.50px;top:53.10px;font-size:12.4px;letter-spacing:0.450px;">traefik</div><div class="t" style="left:433.66px;top:53.10px;font-size:12.4px;letter-spacing:0.450px;">0.200 req/s</div><div class="t" style="left:523.76px;top:53.10px;font-size:12.4px;letter-spacing:0.450px;">0.200 req/s</div><div class="a" style="left:8.20px;top:70.50px;width:590.80px;height:1.00px;background:rgba(204,204,220,0.12);"></div><div class="a" style="left:15.80px;top:80.80px;width:14.20px;height:4.00px;background:#5794F2;border-radius:2px;"></div><div class="t" style="left:38.52px;top:76.60px;font-size:12.4px;letter-spacing:0.450px;">websecure</div><div class="t" style="left:441.01px;top:76.60px;font-size:12.4px;letter-spacing:0.450px;">1.17 req/s</div><div class="t" style="left:531.11px;top:76.60px;font-size:12.4px;letter-spacing:0.450px;">3.41 req/s</div></div><div class="a" style="left:616.20px;top:541.20px;width:9.60px;height:82.50px;background:#2c2c2c;"></div><svg class="a" style="left:616.20px;top:541.20px;" width="10" height="10" viewBox="0 0 10 10"><polygon points="1.9,7.0 4.8,3.9 7.7,7.0" fill="#a3a3a3"/></svg><svg class="a" style="left:616.20px;top:613.70px;" width="10" height="10" viewBox="0 0 10 10"><polygon points="1.9,3.0 4.8,6.1 7.7,3.0" fill="#a3a3a3"/></svg><div class="a" style="left:618.10px;top:553.20px;width:5.80px;height:51.60px;background:#a0a0a0;border-radius:2.9px;"></div><div class="a" style="left:712.20px;top:519.00px;width:533.30px;height:1.00px;background:rgba(204,204,220,0.1);"></div><div class="a" style="left:712.20px;top:503.00px;width:533.30px;height:1.00px;background:rgba(204,204,220,0.1);"></div><div class="a" style="left:712.20px;top:486.00px;width:533.30px;height:1.00px;background:rgba(204,204,220,0.1);"></div><div class="a" style="left:712.20px;top:470.00px;width:533.30px;height:1.00px;background:rgba(204,204,220,0.1);"></div><div class="a" style="left:712.20px;top:453.00px;width:533.30px;height:1.00px;background:rgba(204,204,220,0.1);"></div><div class="a" style="left:712.20px;top:437.00px;width:533.30px;height:1.00px;background:rgba(204,204,220,0.1);"></div><div class="a" style="left:712.20px;top:420.00px;width:533.30px;height:1.00px;background:rgba(204,204,220,0.1);"></div><div class="a" style="left:712.20px;top:404.00px;width:533.30px;height:1.00px;background:rgba(204,204,220,0.1);"></div><div class="a" style="left:736.00px;top:394.70px;width:1.00px;height:128.30px;background:rgba(204,204,220,0.1);"></div><div class="a" style="left:888.00px;top:394.70px;width:1.00px;height:128.30px;background:rgba(204,204,220,0.1);"></div><div class="a" style="left:1041.00px;top:394.70px;width:1.00px;height:128.30px;background:rgba(204,204,220,0.1);"></div><div class="a" style="left:1193.00px;top:394.70px;width:1.00px;height:128.30px;background:rgba(204,204,220,0.1);"></div><div class="t" style="left:666.59px;top:512.80px;font-size:12.4px;letter-spacing:0.350px;">0 req/s</div><div class="t" style="left:655.55px;top:496.80px;font-size:12.4px;letter-spacing:0.350px;">0.5 req/s</div><div class="t" style="left:666.59px;top:479.80px;font-size:12.4px;letter-spacing:0.350px;">1 req/s</div><div class="t" style="left:655.55px;top:463.80px;font-size:12.4px;letter-spacing:0.350px;">1.5 req/s</div><div class="t" style="left:666.59px;top:446.80px;font-size:12.4px;letter-spacing:0.350px;">2 req/s</div><div class="t" style="left:655.55px;top:430.80px;font-size:12.4px;letter-spacing:0.350px;">2.5 req/s</div><div class="t" style="left:666.59px;top:413.80px;font-size:12.4px;letter-spacing:0.350px;">3 req/s</div><div class="t" style="left:655.55px;top:397.80px;font-size:12.4px;letter-spacing:0.350px;">3.5 req/s</div><div class="t" style="left:720.29px;top:528.30px;font-size:12.4px;letter-spacing:0.350px;">03/19</div><div class="t" style="left:872.29px;top:528.30px;font-size:12.4px;letter-spacing:0.350px;">03/21</div><div class="t" style="left:1025.29px;top:528.30px;font-size:12.4px;letter-spacing:0.350px;">03/23</div><div class="t" style="left:1177.29px;top:528.30px;font-size:12.4px;letter-spacing:0.350px;">03/25</div><svg class="a" style="left:705.00px;top:390.00px;" width="545.00" height="135.00" viewBox="705.00 390.00 545.00 135.00"><path d="M712.46,467.02 L714.03,471.23 L715.84,476.65 L717.64,477.25 L719.45,480.26 L720.65,480.86 L721.86,470.03 L722.82,481.46 L726.07,482.06 L727.27,490.49 L729.08,491.70 L733.89,491.09 L736.30,489.29 L739.91,488.69 L741.72,488.08 L742.32,512.16 L744.13,512.77 L745.93,490.49 L748.34,490.64 L750.75,490.78 L753.16,490.49 L755.57,490.45 L757.97,490.22 L760.38,489.29 L762.79,485.68 L763.99,462.40 L764.84,462.40 L765.80,462.40 L767.00,484.47 L768.81,484.47 L770.62,486.88 L772.42,490.49 L773.63,516.98 L773.63,519.40 L712.46,519.40 Z" fill="#73BF69" fill-opacity="0.1"/><path d="M712.46,460.62 L714.03,464.83 L715.84,470.25 L717.64,470.85 L719.45,473.86 L720.65,474.46 L721.86,463.63 L722.82,475.06 L726.07,475.66 L727.27,484.09 L729.08,485.30 L733.89,484.69 L736.30,482.89 L739.91,482.29 L741.72,481.68 L742.32,505.76 L744.13,506.37 L745.93,484.09 L748.34,484.24 L750.75,484.38 L753.16,484.09 L755.57,484.05 L757.97,483.82 L760.38,482.89 L762.79,479.28 L763.99,425.10 L764.84,407.64 L765.80,455.20 L767.00,478.07 L768.81,478.07 L770.62,480.48 L772.42,484.09 L773.63,510.58 L773.63,516.98 L772.42,490.49 L770.62,486.88 L768.81,484.47 L767.00,484.47 L765.80,462.40 L764.84,462.40 L763.99,462.40 L762.79,485.68 L760.38,489.29 L757.97,490.22 L755.57,490.45 L753.16,490.49 L750.75,490.78 L748.34,490.64 L745.93,490.49 L744.13,512.77 L742.32,512.16 L741.72,488.08 L739.91,488.69 L736.30,489.29 L733.89,491.09 L729.08,491.70 L727.27,490.49 L726.07,482.06 L722.82,481.46 L721.86,470.03 L720.65,480.86 L719.45,480.26 L717.64,477.25 L715.84,476.65 L714.03,471.23 L712.46,467.02 Z" fill="#5794F2" fill-opacity="0.1"/><polyline points="712.46,467.02 714.03,471.23 715.84,476.65 717.64,477.25 719.45,480.26 720.65,480.86 721.86,470.03 722.82,481.46 726.07,482.06 727.27,490.49 729.08,491.70 733.89,491.09 736.30,489.29 739.91,488.69 741.72,488.08 742.32,512.16 744.13,512.77 745.93,490.49 748.34,490.64 750.75,490.78 753.16,490.49 755.57,490.45 757.97,490.22 760.38,489.29 762.79,485.68 763.99,462.40 764.84,462.40 765.80,462.40 767.00,484.47 768.81,484.47 770.62,486.88 772.42,490.49 773.63,516.98" fill="none" stroke="#73BF69" stroke-width="2.0" stroke-linejoin="round" stroke-opacity="1.0"/><polyline points="712.46,463.02 714.03,467.23 715.84,472.65 717.64,473.25 719.45,476.26 720.65,476.86 721.86,466.03 722.82,477.46 726.07,478.06 727.27,486.49 729.08,487.70 733.89,487.09 736.30,485.29 739.91,484.69 741.72,484.08 742.32,508.16 744.13,508.77 745.93,486.49 748.34,486.64 750.75,486.78 753.16,486.49 755.57,486.45 757.97,486.22 760.38,485.29 762.79,481.68 763.99,427.50 764.84,410.04 765.80,457.60 767.00,480.47 768.81,480.47 770.62,482.88 772.42,486.49 773.63,512.98" fill="none" stroke="#5794F2" stroke-width="1.4" stroke-linejoin="round" stroke-opacity="1.0"/><polyline points="712.46,461.82 714.03,466.03 715.84,471.45 717.64,472.05 719.45,475.06 720.65,475.66 721.86,464.83 722.82,476.26 726.07,476.86 727.27,485.29 729.08,486.50 733.89,485.89 736.30,484.09 739.91,483.49 741.72,482.88 742.32,506.96 744.13,507.57 745.93,485.29 748.34,485.44 750.75,485.58 753.16,485.29 755.57,485.25 757.97,485.02 760.38,484.09 762.79,480.48 763.99,426.30 764.84,408.84 765.80,456.40 767.00,479.27 768.81,479.27 770.62,481.68 772.42,485.29 773.63,511.78" fill="none" stroke="#F2CC0C" stroke-width="1.4" stroke-linejoin="round" stroke-opacity="1.0"/><polyline points="712.46,460.62 714.03,464.83 715.84,470.25 717.64,470.85 719.45,473.86 720.65,474.46 721.86,463.63 722.82,475.06 726.07,475.66 727.27,484.09 729.08,485.30 733.89,484.69 736.30,482.89 739.91,482.29 741.72,481.68 742.32,505.76 744.13,506.37 745.93,484.09 748.34,484.24 750.75,484.38 753.16,484.09 755.57,484.05 757.97,483.82 760.38,482.89 762.79,479.28 763.99,425.10 764.84,407.64 765.80,455.20 767.00,478.07 768.81,478.07 770.62,480.48 772.42,484.09 773.63,510.58" fill="none" stroke="#F2495C" stroke-width="2.0" stroke-linejoin="round" stroke-opacity="1.0"/><path d="M776.03,509.76 L777.84,506.14 L779.04,492.90 L780.25,484.47 L782.45,485.23 L784.66,485.66 L786.87,485.68 L788.07,519.40 L789.88,485.68 L791.88,486.16 L793.68,487.34 L795.48,486.00 L797.28,486.93 L799.08,485.94 L800.88,486.20 L802.68,487.40 L804.48,486.14 L806.28,486.83 L808.08,486.53 L809.88,486.53 L811.68,486.59 L813.48,486.11 L815.28,487.13 L817.08,485.94 L818.88,486.17 L820.68,485.83 L822.48,486.23 L824.28,486.45 L826.08,487.24 L827.88,486.41 L829.68,485.98 L831.48,486.21 L833.28,487.39 L835.08,485.90 L836.88,486.79 L838.68,486.40 L840.48,486.86 L842.28,486.34 L843.80,486.75 L844.85,480.50 L845.15,480.50 L846.20,486.60 L848.00,486.84 L849.80,487.24 L851.60,486.73 L852.50,486.31 L853.35,483.30 L853.65,483.30 L854.50,486.25 L856.30,487.31 L858.10,486.58 L859.90,486.11 L861.70,487.31 L863.50,486.73 L865.30,486.97 L867.10,487.21 L868.90,486.26 L870.70,486.37 L872.50,487.20 L874.30,486.02 L876.10,487.02 L877.90,485.96 L878.70,486.75 L879.55,483.20 L879.85,483.20 L880.70,486.76 L882.50,487.32 L884.30,487.15 L886.10,486.61 L887.90,486.12 L889.70,486.04 L891.50,486.65 L893.30,486.62 L895.10,485.91 L896.90,487.25 L898.70,486.61 L900.50,486.92 L902.30,486.15 L904.10,486.19 L905.90,485.82 L907.70,486.35 L909.50,486.23 L911.30,486.48 L913.10,486.40 L914.90,487.13 L916.70,487.23 L918.50,486.08 L920.30,486.43 L922.10,486.07 L922.50,486.73 L923.35,482.30 L923.65,482.30 L924.50,486.98 L926.30,486.12 L928.10,487.03 L929.55,486.44 L930.60,497.30 L930.90,497.30 L931.95,486.21 L929.60,486.81 L930.65,497.20 L930.95,497.20 L932.00,486.47 L933.80,486.07 L935.60,486.50 L937.40,486.17 L939.20,486.46 L941.00,486.51 L942.80,486.47 L944.60,486.74 L946.40,486.26 L948.20,485.95 L950.00,485.94 L951.80,485.97 L953.60,486.63 L955.40,486.38 L957.20,487.09 L959.00,486.61 L960.80,486.93 L962.60,487.37 L964.40,485.90 L966.20,485.83 L968.00,486.02 L969.80,486.42 L971.60,486.72 L973.40,486.99 L975.20,486.36 L977.00,487.34 L978.80,485.80 L980.60,487.14 L982.40,486.14 L984.20,487.20 L986.00,485.85 L987.80,487.34 L989.60,487.02 L991.40,487.38 L993.20,486.73 L995.00,486.08 L996.80,487.35 L998.60,486.51 L1000.40,485.93 L1002.20,486.77 L1004.00,486.60 L1005.80,486.56 L1007.60,486.05 L1009.40,486.00 L1011.20,486.73 L1013.00,486.52 L1014.80,486.00 L1016.60,486.50 L1018.40,486.96 L1020.20,486.94 L1022.00,486.55 L1023.80,486.43 L1025.60,486.38 L1027.40,486.16 L1029.20,486.12 L1031.00,486.51 L1032.80,485.97 L1034.60,486.96 L1036.40,486.93 L1038.20,486.78 L1040.00,485.84 L1041.80,486.38 L1043.60,486.49 L1045.40,485.95 L1047.20,487.35 L1049.00,487.01 L1050.80,486.60 L1052.60,486.93 L1054.40,486.12 L1056.20,486.17 L1058.00,486.64 L1059.80,486.99 L1061.60,486.84 L1063.20,486.21 L1064.25,496.20 L1064.55,496.20 L1065.60,486.69 L1067.40,487.25 L1069.20,486.99 L1071.00,487.28 L1072.80,487.37 L1074.60,486.16 L1076.40,486.27 L1078.20,486.68 L1080.00,487.36 L1081.80,486.39 L1083.60,487.31 L1085.40,487.16 L1087.20,486.63 L1087.90,486.70 L1088.75,489.40 L1089.05,489.40 L1089.90,486.97 L1091.00,486.83 L1091.85,483.90 L1092.15,483.90 L1093.00,486.44 L1094.80,487.15 L1096.60,486.11 L1098.40,486.39 L1100.20,487.33 L1102.00,487.16 L1103.80,486.30 L1105.50,486.43 L1106.35,480.50 L1106.65,480.50 L1107.50,486.69 L1107.60,486.87 L1108.45,480.50 L1108.75,480.50 L1109.60,486.75 L1111.40,487.30 L1113.20,486.96 L1115.00,487.11 L1116.80,486.77 L1118.60,486.38 L1120.40,486.48 L1122.20,486.58 L1124.00,486.65 L1125.80,487.14 L1127.60,486.23 L1128.50,486.25 L1129.35,483.40 L1129.65,483.40 L1130.50,486.79 L1132.30,486.23 L1134.10,486.47 L1135.90,485.99 L1137.70,487.13 L1139.50,486.24 L1141.30,486.27 L1143.10,487.09 L1144.90,486.61 L1146.70,486.24 L1148.50,487.22 L1150.30,486.46 L1152.10,486.38 L1153.90,487.34 L1155.70,487.06 L1157.50,487.00 L1158.70,486.40 L1159.55,482.90 L1159.85,482.90 L1160.70,486.85 L1162.50,486.64 L1164.30,486.73 L1166.10,486.55 L1167.90,486.71 L1169.70,486.72 L1171.50,486.56 L1173.30,486.66 L1175.10,486.71 L1176.90,486.80 L1178.70,486.77 L1180.50,486.71 L1182.10,486.53 L1182.85,497.20 L1183.15,497.20 L1183.90,486.62 L1185.20,486.64 L1185.85,492.40 L1186.15,492.40 L1186.80,486.52 L1187.60,486.59 L1188.35,496.90 L1188.65,496.90 L1189.40,486.67 L1191.00,486.68 L1191.85,483.70 L1192.15,483.70 L1193.00,486.69 L1194.80,486.44 L1196.60,486.64 L1198.40,486.75 L1200.20,486.66 L1202.00,486.53 L1203.80,486.42 L1205.60,486.77 L1207.40,486.74 L1209.20,486.66 L1211.00,486.55 L1212.80,486.73 L1214.60,486.73 L1216.40,486.69 L1218.20,486.64 L1219.60,486.56 L1220.45,497.20 L1220.75,497.20 L1221.60,486.56 L1223.40,486.54 L1225.20,486.53 L1227.00,486.61 L1228.80,486.45 L1230.60,486.69 L1231.00,486.57 L1231.85,497.90 L1232.15,497.90 L1233.00,486.53 L1234.80,486.50 L1236.60,486.56 L1237.50,486.59 L1238.15,496.40 L1238.45,496.40 L1239.10,486.66 L1239.30,486.52 L1239.85,483.90 L1240.15,483.90 L1240.70,486.54 L1240.80,486.56 L1241.35,496.40 L1241.65,496.40 L1242.20,486.54 L1243.80,486.60 L1243.80,519.40 L776.03,519.40 Z" fill="#73BF69" fill-opacity="0.1"/><path d="M776.03,503.36 L777.84,499.74 L779.04,486.50 L780.25,478.07 L782.45,478.83 L784.66,479.26 L786.87,479.28 L788.07,519.01 L789.88,479.28 L791.88,479.76 L793.68,480.94 L795.48,479.60 L797.28,480.53 L799.08,479.54 L800.88,479.80 L802.68,481.00 L804.48,479.74 L806.28,480.43 L808.08,480.13 L809.88,480.13 L811.68,480.19 L813.48,479.71 L815.28,480.73 L817.08,479.54 L818.88,479.77 L820.68,479.43 L822.48,479.83 L824.28,480.05 L826.08,480.84 L827.88,480.01 L829.68,479.58 L831.48,479.81 L833.28,480.99 L835.08,479.50 L836.88,480.39 L838.68,480.00 L840.48,480.46 L842.28,479.94 L843.80,480.35 L844.85,461.40 L845.15,461.40 L846.20,480.20 L848.00,480.44 L849.80,480.84 L851.60,480.33 L852.50,479.91 L853.35,476.90 L853.65,476.90 L854.50,479.85 L856.30,480.91 L858.10,480.18 L859.90,479.71 L861.70,480.91 L863.50,480.33 L865.30,480.57 L867.10,480.81 L868.90,479.86 L870.70,479.97 L872.50,480.80 L874.30,479.62 L876.10,480.62 L877.90,479.56 L878.70,480.35 L879.55,476.80 L879.85,476.80 L880.70,480.36 L882.50,480.92 L884.30,480.75 L886.10,480.21 L887.90,479.72 L889.70,479.64 L891.50,480.25 L893.30,480.22 L895.10,479.51 L896.90,480.85 L898.70,480.21 L900.50,480.52 L902.30,479.75 L904.10,479.79 L905.90,479.42 L907.70,479.95 L909.50,479.83 L911.30,480.08 L913.10,480.00 L914.90,480.73 L916.70,480.83 L918.50,479.68 L920.30,480.03 L922.10,479.67 L922.50,480.33 L923.35,475.90 L923.65,475.90 L924.50,480.58 L926.30,479.72 L928.10,480.63 L929.55,480.04 L930.60,490.90 L930.90,490.90 L931.95,479.81 L929.60,480.41 L930.65,490.80 L930.95,490.80 L932.00,480.07 L933.80,479.67 L935.60,480.10 L937.40,479.77 L939.20,480.06 L941.00,480.11 L942.80,480.07 L944.60,480.34 L946.40,479.86 L948.20,479.55 L950.00,479.54 L951.80,479.57 L953.60,480.23 L955.40,479.98 L957.20,480.69 L959.00,480.21 L960.80,480.53 L962.60,480.97 L964.40,479.50 L966.20,479.43 L968.00,479.62 L969.80,480.02 L971.60,480.32 L973.40,480.59 L975.20,479.96 L977.00,480.94 L978.80,479.40 L980.60,480.74 L982.40,479.74 L984.20,480.80 L986.00,479.45 L987.80,480.94 L989.60,480.62 L991.40,480.98 L993.20,480.33 L995.00,479.68 L996.80,480.95 L998.60,480.11 L1000.40,479.53 L1002.20,480.37 L1004.00,480.20 L1005.80,480.16 L1007.60,479.65 L1009.40,479.60 L1011.20,480.33 L1013.00,480.12 L1014.80,479.60 L1016.60,480.10 L1018.40,480.56 L1020.20,480.54 L1022.00,480.15 L1023.80,480.03 L1025.60,479.98 L1027.40,479.76 L1029.20,479.72 L1031.00,480.11 L1032.80,479.57 L1034.60,480.56 L1036.40,480.53 L1038.20,480.38 L1040.00,479.44 L1041.80,479.98 L1043.60,480.09 L1045.40,479.55 L1047.20,480.95 L1049.00,480.61 L1050.80,480.20 L1052.60,480.53 L1054.40,479.72 L1056.20,479.77 L1058.00,480.24 L1059.80,480.59 L1061.60,480.44 L1063.20,479.81 L1064.25,489.80 L1064.55,489.80 L1065.60,480.29 L1067.40,480.85 L1069.20,480.59 L1071.00,480.88 L1072.80,480.97 L1074.60,479.76 L1076.40,479.87 L1078.20,480.28 L1080.00,480.96 L1081.80,479.99 L1083.60,480.91 L1085.40,480.76 L1087.20,480.23 L1087.90,480.30 L1088.75,483.00 L1089.05,483.00 L1089.90,480.57 L1091.00,480.43 L1091.85,477.50 L1092.15,477.50 L1093.00,480.04 L1094.80,480.75 L1096.60,479.71 L1098.40,479.99 L1100.20,480.93 L1102.00,480.76 L1103.80,479.90 L1105.50,480.03 L1106.35,470.50 L1106.65,470.50 L1107.50,480.29 L1107.60,480.47 L1108.45,461.70 L1108.75,461.70 L1109.60,480.35 L1111.40,480.90 L1113.20,480.56 L1115.00,480.71 L1116.80,480.37 L1118.60,479.98 L1120.40,480.08 L1122.20,480.18 L1124.00,480.25 L1125.80,480.74 L1127.60,479.83 L1128.50,479.85 L1129.35,477.00 L1129.65,477.00 L1130.50,480.39 L1132.30,479.83 L1134.10,480.07 L1135.90,479.59 L1137.70,480.73 L1139.50,479.84 L1141.30,479.87 L1143.10,480.69 L1144.90,480.21 L1146.70,479.84 L1148.50,480.82 L1150.30,480.06 L1152.10,479.98 L1153.90,480.94 L1155.70,480.66 L1157.50,480.60 L1158.70,480.00 L1159.55,476.50 L1159.85,476.50 L1160.70,480.45 L1162.50,480.24 L1164.30,480.33 L1166.10,480.15 L1167.90,480.31 L1169.70,480.32 L1171.50,480.16 L1173.30,480.26 L1175.10,480.31 L1176.90,480.40 L1178.70,480.37 L1180.50,480.31 L1182.10,480.13 L1182.85,490.80 L1183.15,490.80 L1183.90,480.22 L1185.20,480.24 L1185.85,486.00 L1186.15,486.00 L1186.80,480.12 L1187.60,480.19 L1188.35,490.50 L1188.65,490.50 L1189.40,480.27 L1191.00,480.28 L1191.85,477.30 L1192.15,477.30 L1193.00,480.29 L1194.80,480.04 L1196.60,480.24 L1198.40,480.35 L1200.20,480.26 L1202.00,480.13 L1203.80,480.02 L1205.60,480.37 L1207.40,480.34 L1209.20,480.26 L1211.00,480.15 L1212.80,480.33 L1214.60,480.33 L1216.40,480.29 L1218.20,480.24 L1219.60,480.16 L1220.45,490.80 L1220.75,490.80 L1221.60,480.16 L1223.40,480.14 L1225.20,480.13 L1227.00,480.21 L1228.80,480.05 L1230.60,480.29 L1231.00,480.17 L1231.85,491.50 L1232.15,491.50 L1233.00,480.13 L1234.80,480.10 L1236.60,480.16 L1237.50,480.19 L1238.15,490.00 L1238.45,490.00 L1239.10,480.26 L1239.30,480.12 L1239.85,477.50 L1240.15,477.50 L1240.70,480.14 L1240.80,480.16 L1241.35,490.00 L1241.65,490.00 L1242.20,480.14 L1243.80,480.20 L1243.80,486.60 L1242.20,486.54 L1241.65,496.40 L1241.35,496.40 L1240.80,486.56 L1240.70,486.54 L1240.15,483.90 L1239.85,483.90 L1239.30,486.52 L1239.10,486.66 L1238.45,496.40 L1238.15,496.40 L1237.50,486.59 L1236.60,486.56 L1234.80,486.50 L1233.00,486.53 L1232.15,497.90 L1231.85,497.90 L1231.00,486.57 L1230.60,486.69 L1228.80,486.45 L1227.00,486.61 L1225.20,486.53 L1223.40,486.54 L1221.60,486.56 L1220.75,497.20 L1220.45,497.20 L1219.60,486.56 L1218.20,486.64 L1216.40,486.69 L1214.60,486.73 L1212.80,486.73 L1211.00,486.55 L1209.20,486.66 L1207.40,486.74 L1205.60,486.77 L1203.80,486.42 L1202.00,486.53 L1200.20,486.66 L1198.40,486.75 L1196.60,486.64 L1194.80,486.44 L1193.00,486.69 L1192.15,483.70 L1191.85,483.70 L1191.00,486.68 L1189.40,486.67 L1188.65,496.90 L1188.35,496.90 L1187.60,486.59 L1186.80,486.52 L1186.15,492.40 L1185.85,492.40 L1185.20,486.64 L1183.90,486.62 L1183.15,497.20 L1182.85,497.20 L1182.10,486.53 L1180.50,486.71 L1178.70,486.77 L1176.90,486.80 L1175.10,486.71 L1173.30,486.66 L1171.50,486.56 L1169.70,486.72 L1167.90,486.71 L1166.10,486.55 L1164.30,486.73 L1162.50,486.64 L1160.70,486.85 L1159.85,482.90 L1159.55,482.90 L1158.70,486.40 L1157.50,487.00 L1155.70,487.06 L1153.90,487.34 L1152.10,486.38 L1150.30,486.46 L1148.50,487.22 L1146.70,486.24 L1144.90,486.61 L1143.10,487.09 L1141.30,486.27 L1139.50,486.24 L1137.70,487.13 L1135.90,485.99 L1134.10,486.47 L1132.30,486.23 L1130.50,486.79 L1129.65,483.40 L1129.35,483.40 L1128.50,486.25 L1127.60,486.23 L1125.80,487.14 L1124.00,486.65 L1122.20,486.58 L1120.40,486.48 L1118.60,486.38 L1116.80,486.77 L1115.00,487.11 L1113.20,486.96 L1111.40,487.30 L1109.60,486.75 L1108.75,480.50 L1108.45,480.50 L1107.60,486.87 L1107.50,486.69 L1106.65,480.50 L1106.35,480.50 L1105.50,486.43 L1103.80,486.30 L1102.00,487.16 L1100.20,487.33 L1098.40,486.39 L1096.60,486.11 L1094.80,487.15 L1093.00,486.44 L1092.15,483.90 L1091.85,483.90 L1091.00,486.83 L1089.90,486.97 L1089.05,489.40 L1088.75,489.40 L1087.90,486.70 L1087.20,486.63 L1085.40,487.16 L1083.60,487.31 L1081.80,486.39 L1080.00,487.36 L1078.20,486.68 L1076.40,486.27 L1074.60,486.16 L1072.80,487.37 L1071.00,487.28 L1069.20,486.99 L1067.40,487.25 L1065.60,486.69 L1064.55,496.20 L1064.25,496.20 L1063.20,486.21 L1061.60,486.84 L1059.80,486.99 L1058.00,486.64 L1056.20,486.17 L1054.40,486.12 L1052.60,486.93 L1050.80,486.60 L1049.00,487.01 L1047.20,487.35 L1045.40,485.95 L1043.60,486.49 L1041.80,486.38 L1040.00,485.84 L1038.20,486.78 L1036.40,486.93 L1034.60,486.96 L1032.80,485.97 L1031.00,486.51 L1029.20,486.12 L1027.40,486.16 L1025.60,486.38 L1023.80,486.43 L1022.00,486.55 L1020.20,486.94 L1018.40,486.96 L1016.60,486.50 L1014.80,486.00 L1013.00,486.52 L1011.20,486.73 L1009.40,486.00 L1007.60,486.05 L1005.80,486.56 L1004.00,486.60 L1002.20,486.77 L1000.40,485.93 L998.60,486.51 L996.80,487.35 L995.00,486.08 L993.20,486.73 L991.40,487.38 L989.60,487.02 L987.80,487.34 L986.00,485.85 L984.20,487.20 L982.40,486.14 L980.60,487.14 L978.80,485.80 L977.00,487.34 L975.20,486.36 L973.40,486.99 L971.60,486.72 L969.80,486.42 L968.00,486.02 L966.20,485.83 L964.40,485.90 L962.60,487.37 L960.80,486.93 L959.00,486.61 L957.20,487.09 L955.40,486.38 L953.60,486.63 L951.80,485.97 L950.00,485.94 L948.20,485.95 L946.40,486.26 L944.60,486.74 L942.80,486.47 L941.00,486.51 L939.20,486.46 L937.40,486.17 L935.60,486.50 L933.80,486.07 L932.00,486.47 L930.95,497.20 L930.65,497.20 L929.60,486.81 L931.95,486.21 L930.90,497.30 L930.60,497.30 L929.55,486.44 L928.10,487.03 L926.30,486.12 L924.50,486.98 L923.65,482.30 L923.35,482.30 L922.50,486.73 L922.10,486.07 L920.30,486.43 L918.50,486.08 L916.70,487.23 L914.90,487.13 L913.10,486.40 L911.30,486.48 L909.50,486.23 L907.70,486.35 L905.90,485.82 L904.10,486.19 L902.30,486.15 L900.50,486.92 L898.70,486.61 L896.90,487.25 L895.10,485.91 L893.30,486.62 L891.50,486.65 L889.70,486.04 L887.90,486.12 L886.10,486.61 L884.30,487.15 L882.50,487.32 L880.70,486.76 L879.85,483.20 L879.55,483.20 L878.70,486.75 L877.90,485.96 L876.10,487.02 L874.30,486.02 L872.50,487.20 L870.70,486.37 L868.90,486.26 L867.10,487.21 L865.30,486.97 L863.50,486.73 L861.70,487.31 L859.90,486.11 L858.10,486.58 L856.30,487.31 L854.50,486.25 L853.65,483.30 L853.35,483.30 L852.50,486.31 L851.60,486.73 L849.80,487.24 L848.00,486.84 L846.20,486.60 L845.15,480.50 L844.85,480.50 L843.80,486.75 L842.28,486.34 L840.48,486.86 L838.68,486.40 L836.88,486.79 L835.08,485.90 L833.28,487.39 L831.48,486.21 L829.68,485.98 L827.88,486.41 L826.08,487.24 L824.28,486.45 L822.48,486.23 L820.68,485.83 L818.88,486.17 L817.08,485.94 L815.28,487.13 L813.48,486.11 L811.68,486.59 L809.88,486.53 L808.08,486.53 L806.28,486.83 L804.48,486.14 L802.68,487.40 L800.88,486.20 L799.08,485.94 L797.28,486.93 L795.48,486.00 L793.68,487.34 L791.88,486.16 L789.88,485.68 L788.07,519.40 L786.87,485.68 L784.66,485.66 L782.45,485.23 L780.25,484.47 L779.04,492.90 L777.84,506.14 L776.03,509.76 Z" fill="#5794F2" fill-opacity="0.1"/><polyline points="776.03,509.76 777.84,506.14 779.04,492.90 780.25,484.47 782.45,485.23 784.66,485.66 786.87,485.68 788.07,519.40 789.88,485.68 791.88,486.16 793.68,487.34 795.48,486.00 797.28,486.93 799.08,485.94 800.88,486.20 802.68,487.40 804.48,486.14 806.28,486.83 808.08,486.53 809.88,486.53 811.68,486.59 813.48,486.11 815.28,487.13 817.08,485.94 818.88,486.17 820.68,485.83 822.48,486.23 824.28,486.45 826.08,487.24 827.88,486.41 829.68,485.98 831.48,486.21 833.28,487.39 835.08,485.90 836.88,486.79 838.68,486.40 840.48,486.86 842.28,486.34 843.80,486.75 844.85,480.50 845.15,480.50 846.20,486.60 848.00,486.84 849.80,487.24 851.60,486.73 852.50,486.31 853.35,483.30 853.65,483.30 854.50,486.25 856.30,487.31 858.10,486.58 859.90,486.11 861.70,487.31 863.50,486.73 865.30,486.97 867.10,487.21 868.90,486.26 870.70,486.37 872.50,487.20 874.30,486.02 876.10,487.02 877.90,485.96 878.70,486.75 879.55,483.20 879.85,483.20 880.70,486.76 882.50,487.32 884.30,487.15 886.10,486.61 887.90,486.12 889.70,486.04 891.50,486.65 893.30,486.62 895.10,485.91 896.90,487.25 898.70,486.61 900.50,486.92 902.30,486.15 904.10,486.19 905.90,485.82 907.70,486.35 909.50,486.23 911.30,486.48 913.10,486.40 914.90,487.13 916.70,487.23 918.50,486.08 920.30,486.43 922.10,486.07 922.50,486.73 923.35,482.30 923.65,482.30 924.50,486.98 926.30,486.12 928.10,487.03 929.55,486.44 930.60,497.30 930.90,497.30 931.95,486.21 929.60,486.81 930.65,497.20 930.95,497.20 932.00,486.47 933.80,486.07 935.60,486.50 937.40,486.17 939.20,486.46 941.00,486.51 942.80,486.47 944.60,486.74 946.40,486.26 948.20,485.95 950.00,485.94 951.80,485.97 953.60,486.63 955.40,486.38 957.20,487.09 959.00,486.61 960.80,486.93 962.60,487.37 964.40,485.90 966.20,485.83 968.00,486.02 969.80,486.42 971.60,486.72 973.40,486.99 975.20,486.36 977.00,487.34 978.80,485.80 980.60,487.14 982.40,486.14 984.20,487.20 986.00,485.85 987.80,487.34 989.60,487.02 991.40,487.38 993.20,486.73 995.00,486.08 996.80,487.35 998.60,486.51 1000.40,485.93 1002.20,486.77 1004.00,486.60 1005.80,486.56 1007.60,486.05 1009.40,486.00 1011.20,486.73 1013.00,486.52 1014.80,486.00 1016.60,486.50 1018.40,486.96 1020.20,486.94 1022.00,486.55 1023.80,486.43 1025.60,486.38 1027.40,486.16 1029.20,486.12 1031.00,486.51 1032.80,485.97 1034.60,486.96 1036.40,486.93 1038.20,486.78 1040.00,485.84 1041.80,486.38 1043.60,486.49 1045.40,485.95 1047.20,487.35 1049.00,487.01 1050.80,486.60 1052.60,486.93 1054.40,486.12 1056.20,486.17 1058.00,486.64 1059.80,486.99 1061.60,486.84 1063.20,486.21 1064.25,496.20 1064.55,496.20 1065.60,486.69 1067.40,487.25 1069.20,486.99 1071.00,487.28 1072.80,487.37 1074.60,486.16 1076.40,486.27 1078.20,486.68 1080.00,487.36 1081.80,486.39 1083.60,487.31 1085.40,487.16 1087.20,486.63 1087.90,486.70 1088.75,489.40 1089.05,489.40 1089.90,486.97 1091.00,486.83 1091.85,483.90 1092.15,483.90 1093.00,486.44 1094.80,487.15 1096.60,486.11 1098.40,486.39 1100.20,487.33 1102.00,487.16 1103.80,486.30 1105.50,486.43 1106.35,480.50 1106.65,480.50 1107.50,486.69 1107.60,486.87 1108.45,480.50 1108.75,480.50 1109.60,486.75 1111.40,487.30 1113.20,486.96 1115.00,487.11 1116.80,486.77 1118.60,486.38 1120.40,486.48 1122.20,486.58 1124.00,486.65 1125.80,487.14 1127.60,486.23 1128.50,486.25 1129.35,483.40 1129.65,483.40 1130.50,486.79 1132.30,486.23 1134.10,486.47 1135.90,485.99 1137.70,487.13 1139.50,486.24 1141.30,486.27 1143.10,487.09 1144.90,486.61 1146.70,486.24 1148.50,487.22 1150.30,486.46 1152.10,486.38 1153.90,487.34 1155.70,487.06 1157.50,487.00 1158.70,486.40 1159.55,482.90 1159.85,482.90 1160.70,486.85 1162.50,486.64 1164.30,486.73 1166.10,486.55 1167.90,486.71 1169.70,486.72 1171.50,486.56 1173.30,486.66 1175.10,486.71 1176.90,486.80 1178.70,486.77 1180.50,486.71 1182.10,486.53 1182.85,497.20 1183.15,497.20 1183.90,486.62 1185.20,486.64 1185.85,492.40 1186.15,492.40 1186.80,486.52 1187.60,486.59 1188.35,496.90 1188.65,496.90 1189.40,486.67 1191.00,486.68 1191.85,483.70 1192.15,483.70 1193.00,486.69 1194.80,486.44 1196.60,486.64 1198.40,486.75 1200.20,486.66 1202.00,486.53 1203.80,486.42 1205.60,486.77 1207.40,486.74 1209.20,486.66 1211.00,486.55 1212.80,486.73 1214.60,486.73 1216.40,486.69 1218.20,486.64 1219.60,486.56 1220.45,497.20 1220.75,497.20 1221.60,486.56 1223.40,486.54 1225.20,486.53 1227.00,486.61 1228.80,486.45 1230.60,486.69 1231.00,486.57 1231.85,497.90 1232.15,497.90 1233.00,486.53 1234.80,486.50 1236.60,486.56 1237.50,486.59 1238.15,496.40 1238.45,496.40 1239.10,486.66 1239.30,486.52 1239.85,483.90 1240.15,483.90 1240.70,486.54 1240.80,486.56 1241.35,496.40 1241.65,496.40 1242.20,486.54 1243.80,486.60" fill="none" stroke="#73BF69" stroke-width="2.0" stroke-linejoin="round" stroke-opacity="1.0"/><polyline points="776.03,505.76 777.84,502.14 779.04,488.90 780.25,480.47 782.45,481.23 784.66,481.66 786.87,481.68 788.07,519.40 789.88,481.68 791.88,480.76 793.68,481.94 795.48,480.60 797.28,481.53 799.08,480.54 800.88,480.80 802.68,482.00 804.48,480.74 806.28,481.43 808.08,481.13 809.88,481.13 811.68,481.19 813.48,480.71 815.28,481.73 817.08,480.54 818.88,480.77 820.68,480.43 822.48,480.83 824.28,481.05 826.08,481.84 827.88,481.01 829.68,480.58 831.48,480.81 833.28,481.99 835.08,480.50 836.88,481.39 838.68,481.00 840.48,481.46 842.28,480.94 843.80,481.35 844.85,462.40 845.15,462.40 846.20,481.20 848.00,481.44 849.80,481.84 851.60,481.33 852.50,480.91 853.35,477.90 853.65,477.90 854.50,480.85 856.30,481.91 858.10,481.18 859.90,480.71 861.70,481.91 863.50,481.33 865.30,481.57 867.10,481.81 868.90,480.86 870.70,480.97 872.50,481.80 874.30,480.62 876.10,481.62 877.90,480.56 878.70,481.35 879.55,477.80 879.85,477.80 880.70,481.36 882.50,481.92 884.30,481.75 886.10,481.21 887.90,480.72 889.70,480.64 891.50,481.25 893.30,481.22 895.10,480.51 896.90,481.85 898.70,481.21 900.50,481.52 902.30,480.75 904.10,480.79 905.90,480.42 907.70,480.95 909.50,480.83 911.30,481.08 913.10,481.00 914.90,481.73 916.70,481.83 918.50,480.68 920.30,481.03 922.10,480.67 922.50,481.33 923.35,476.90 923.65,476.90 924.50,481.58 926.30,480.72 928.10,481.63 929.55,481.04 930.60,491.90 930.90,491.90 931.95,480.81 929.60,481.41 930.65,491.80 930.95,491.80 932.00,481.07 933.80,480.67 935.60,481.10 937.40,480.77 939.20,481.06 941.00,481.11 942.80,481.07 944.60,481.34 946.40,480.86 948.20,480.55 950.00,480.54 951.80,480.57 953.60,481.23 955.40,480.98 957.20,481.69 959.00,481.21 960.80,481.53 962.60,481.97 964.40,480.50 966.20,480.43 968.00,480.62 969.80,481.02 971.60,481.32 973.40,481.59 975.20,480.96 977.00,481.94 978.80,480.40 980.60,481.74 982.40,480.74 984.20,481.80 986.00,480.45 987.80,481.94 989.60,481.62 991.40,481.98 993.20,481.33 995.00,480.68 996.80,481.95 998.60,481.11 1000.40,480.53 1002.20,481.37 1004.00,481.20 1005.80,481.16 1007.60,480.65 1009.40,480.60 1011.20,481.33 1013.00,481.12 1014.80,480.60 1016.60,481.10 1018.40,481.56 1020.20,481.54 1022.00,481.15 1023.80,481.03 1025.60,480.98 1027.40,480.76 1029.20,480.72 1031.00,481.11 1032.80,480.57 1034.60,481.56 1036.40,481.53 1038.20,481.38 1040.00,480.44 1041.80,480.98 1043.60,481.09 1045.40,480.55 1047.20,481.95 1049.00,481.61 1050.80,481.20 1052.60,481.53 1054.40,480.72 1056.20,480.77 1058.00,481.24 1059.80,481.59 1061.60,481.44 1063.20,480.81 1064.25,490.80 1064.55,490.80 1065.60,481.29 1067.40,481.85 1069.20,481.59 1071.00,481.88 1072.80,481.97 1074.60,480.76 1076.40,480.87 1078.20,481.28 1080.00,481.96 1081.80,480.99 1083.60,481.91 1085.40,481.76 1087.20,481.23 1087.90,481.30 1088.75,484.00 1089.05,484.00 1089.90,481.57 1091.00,481.43 1091.85,478.50 1092.15,478.50 1093.00,481.04 1094.80,481.75 1096.60,480.71 1098.40,480.99 1100.20,481.93 1102.00,481.76 1103.80,480.90 1105.50,481.03 1106.35,471.50 1106.65,471.50 1107.50,481.29 1107.60,481.47 1108.45,462.70 1108.75,462.70 1109.60,481.35 1111.40,481.90 1113.20,481.56 1115.00,481.71 1116.80,481.37 1118.60,480.98 1120.40,481.08 1122.20,481.18 1124.00,481.25 1125.80,481.74 1127.60,480.83 1128.50,480.85 1129.35,478.00 1129.65,478.00 1130.50,481.39 1132.30,480.83 1134.10,481.07 1135.90,480.59 1137.70,481.73 1139.50,480.84 1141.30,480.87 1143.10,481.69 1144.90,481.21 1146.70,480.84 1148.50,481.82 1150.30,481.06 1152.10,480.98 1153.90,481.94 1155.70,481.66 1157.50,481.60 1158.70,481.00 1159.55,477.50 1159.85,477.50 1160.70,481.45 1162.50,481.24 1164.30,481.33 1166.10,481.15 1167.90,481.31 1169.70,481.32 1171.50,481.16 1173.30,481.26 1175.10,481.31 1176.90,481.40 1178.70,481.37 1180.50,481.31 1182.10,481.13 1182.85,491.80 1183.15,491.80 1183.90,481.22 1185.20,481.24 1185.85,487.00 1186.15,487.00 1186.80,481.12 1187.60,481.19 1188.35,491.50 1188.65,491.50 1189.40,481.27 1191.00,481.28 1191.85,478.30 1192.15,478.30 1193.00,481.29 1194.80,481.04 1196.60,481.24 1198.40,481.35 1200.20,481.26 1202.00,481.13 1203.80,481.02 1205.60,481.37 1207.40,481.34 1209.20,481.26 1211.00,481.15 1212.80,481.33 1214.60,481.33 1216.40,481.29 1218.20,481.24 1219.60,481.16 1220.45,491.80 1220.75,491.80 1221.60,481.16 1223.40,481.14 1225.20,481.13 1227.00,481.21 1228.80,481.05 1230.60,481.29 1231.00,481.17 1231.85,492.50 1232.15,492.50 1233.00,481.13 1234.80,481.10 1236.60,481.16 1237.50,481.19 1238.15,491.00 1238.45,491.00 1239.10,481.26 1239.30,481.12 1239.85,478.50 1240.15,478.50 1240.70,481.14 1240.80,481.16 1241.35,491.00 1241.65,491.00 1242.20,481.14 1243.80,481.20" fill="none" stroke="#5794F2" stroke-width="1.4" stroke-linejoin="round" stroke-opacity="1.0"/><polyline points="776.03,504.56 777.84,500.94 779.04,487.70 780.25,479.27 782.45,480.03 784.66,480.46 786.87,480.48 788.07,519.40 789.88,480.48 791.88,480.06 793.68,481.24 795.48,479.90 797.28,480.83 799.08,479.84 800.88,480.10 802.68,481.30 804.48,480.04 806.28,480.73 808.08,480.43 809.88,480.43 811.68,480.49 813.48,480.01 815.28,481.03 817.08,479.84 818.88,480.07 820.68,479.73 822.48,480.13 824.28,480.35 826.08,481.14 827.88,480.31 829.68,479.88 831.48,480.11 833.28,481.29 835.08,479.80 836.88,480.69 838.68,480.30 840.48,480.76 842.28,480.24 843.80,480.65 844.85,461.70 845.15,461.70 846.20,480.50 848.00,480.74 849.80,481.14 851.60,480.63 852.50,480.21 853.35,477.20 853.65,477.20 854.50,480.15 856.30,481.21 858.10,480.48 859.90,480.01 861.70,481.21 863.50,480.63 865.30,480.87 867.10,481.11 868.90,480.16 870.70,480.27 872.50,481.10 874.30,479.92 876.10,480.92 877.90,479.86 878.70,480.65 879.55,477.10 879.85,477.10 880.70,480.66 882.50,481.22 884.30,481.05 886.10,480.51 887.90,480.02 889.70,479.94 891.50,480.55 893.30,480.52 895.10,479.81 896.90,481.15 898.70,480.51 900.50,480.82 902.30,480.05 904.10,480.09 905.90,479.72 907.70,480.25 909.50,480.13 911.30,480.38 913.10,480.30 914.90,481.03 916.70,481.13 918.50,479.98 920.30,480.33 922.10,479.97 922.50,480.63 923.35,476.20 923.65,476.20 924.50,480.88 926.30,480.02 928.10,480.93 929.55,480.34 930.60,491.20 930.90,491.20 931.95,480.11 929.60,480.71 930.65,491.10 930.95,491.10 932.00,480.37 933.80,479.97 935.60,480.40 937.40,480.07 939.20,480.36 941.00,480.41 942.80,480.37 944.60,480.64 946.40,480.16 948.20,479.85 950.00,479.84 951.80,479.87 953.60,480.53 955.40,480.28 957.20,480.99 959.00,480.51 960.80,480.83 962.60,481.27 964.40,479.80 966.20,479.73 968.00,479.92 969.80,480.32 971.60,480.62 973.40,480.89 975.20,480.26 977.00,481.24 978.80,479.70 980.60,481.04 982.40,480.04 984.20,481.10 986.00,479.75 987.80,481.24 989.60,480.92 991.40,481.28 993.20,480.63 995.00,479.98 996.80,481.25 998.60,480.41 1000.40,479.83 1002.20,480.67 1004.00,480.50 1005.80,480.46 1007.60,479.95 1009.40,479.90 1011.20,480.63 1013.00,480.42 1014.80,479.90 1016.60,480.40 1018.40,480.86 1020.20,480.84 1022.00,480.45 1023.80,480.33 1025.60,480.28 1027.40,480.06 1029.20,480.02 1031.00,480.41 1032.80,479.87 1034.60,480.86 1036.40,480.83 1038.20,480.68 1040.00,479.74 1041.80,480.28 1043.60,480.39 1045.40,479.85 1047.20,481.25 1049.00,480.91 1050.80,480.50 1052.60,480.83 1054.40,480.02 1056.20,480.07 1058.00,480.54 1059.80,480.89 1061.60,480.74 1063.20,480.11 1064.25,490.10 1064.55,490.10 1065.60,480.59 1067.40,481.15 1069.20,480.89 1071.00,481.18 1072.80,481.27 1074.60,480.06 1076.40,480.17 1078.20,480.58 1080.00,481.26 1081.80,480.29 1083.60,481.21 1085.40,481.06 1087.20,480.53 1087.90,480.60 1088.75,483.30 1089.05,483.30 1089.90,480.87 1091.00,480.73 1091.85,477.80 1092.15,477.80 1093.00,480.34 1094.80,481.05 1096.60,480.01 1098.40,480.29 1100.20,481.23 1102.00,481.06 1103.80,480.20 1105.50,480.33 1106.35,470.80 1106.65,470.80 1107.50,480.59 1107.60,480.77 1108.45,462.00 1108.75,462.00 1109.60,480.65 1111.40,481.20 1113.20,480.86 1115.00,481.01 1116.80,480.67 1118.60,480.28 1120.40,480.38 1122.20,480.48 1124.00,480.55 1125.80,481.04 1127.60,480.13 1128.50,480.15 1129.35,477.30 1129.65,477.30 1130.50,480.69 1132.30,480.13 1134.10,480.37 1135.90,479.89 1137.70,481.03 1139.50,480.14 1141.30,480.17 1143.10,480.99 1144.90,480.51 1146.70,480.14 1148.50,481.12 1150.30,480.36 1152.10,480.28 1153.90,481.24 1155.70,480.96 1157.50,480.90 1158.70,480.30 1159.55,476.80 1159.85,476.80 1160.70,480.75 1162.50,480.54 1164.30,480.63 1166.10,480.45 1167.90,480.61 1169.70,480.62 1171.50,480.46 1173.30,480.56 1175.10,480.61 1176.90,480.70 1178.70,480.67 1180.50,480.61 1182.10,480.43 1182.85,491.10 1183.15,491.10 1183.90,480.52 1185.20,480.54 1185.85,486.30 1186.15,486.30 1186.80,480.42 1187.60,480.49 1188.35,490.80 1188.65,490.80 1189.40,480.57 1191.00,480.58 1191.85,477.60 1192.15,477.60 1193.00,480.59 1194.80,480.34 1196.60,480.54 1198.40,480.65 1200.20,480.56 1202.00,480.43 1203.80,480.32 1205.60,480.67 1207.40,480.64 1209.20,480.56 1211.00,480.45 1212.80,480.63 1214.60,480.63 1216.40,480.59 1218.20,480.54 1219.60,480.46 1220.45,491.10 1220.75,491.10 1221.60,480.46 1223.40,480.44 1225.20,480.43 1227.00,480.51 1228.80,480.35 1230.60,480.59 1231.00,480.47 1231.85,491.80 1232.15,491.80 1233.00,480.43 1234.80,480.40 1236.60,480.46 1237.50,480.49 1238.15,490.30 1238.45,490.30 1239.10,480.56 1239.30,480.42 1239.85,477.80 1240.15,477.80 1240.70,480.44 1240.80,480.46 1241.35,490.30 1241.65,490.30 1242.20,480.44 1243.80,480.50" fill="none" stroke="#F2CC0C" stroke-width="1.4" stroke-linejoin="round" stroke-opacity="1.0"/><polyline points="776.03,503.36 777.84,499.74 779.04,486.50 780.25,478.07 782.45,478.83 784.66,479.26 786.87,479.28 788.07,519.01 789.88,479.28 791.88,479.76 793.68,480.94 795.48,479.60 797.28,480.53 799.08,479.54 800.88,479.80 802.68,481.00 804.48,479.74 806.28,480.43 808.08,480.13 809.88,480.13 811.68,480.19 813.48,479.71 815.28,480.73 817.08,479.54 818.88,479.77 820.68,479.43 822.48,479.83 824.28,480.05 826.08,480.84 827.88,480.01 829.68,479.58 831.48,479.81 833.28,480.99 835.08,479.50 836.88,480.39 838.68,480.00 840.48,480.46 842.28,479.94 843.80,480.35 844.85,461.40 845.15,461.40 846.20,480.20 848.00,480.44 849.80,480.84 851.60,480.33 852.50,479.91 853.35,476.90 853.65,476.90 854.50,479.85 856.30,480.91 858.10,480.18 859.90,479.71 861.70,480.91 863.50,480.33 865.30,480.57 867.10,480.81 868.90,479.86 870.70,479.97 872.50,480.80 874.30,479.62 876.10,480.62 877.90,479.56 878.70,480.35 879.55,476.80 879.85,476.80 880.70,480.36 882.50,480.92 884.30,480.75 886.10,480.21 887.90,479.72 889.70,479.64 891.50,480.25 893.30,480.22 895.10,479.51 896.90,480.85 898.70,480.21 900.50,480.52 902.30,479.75 904.10,479.79 905.90,479.42 907.70,479.95 909.50,479.83 911.30,480.08 913.10,480.00 914.90,480.73 916.70,480.83 918.50,479.68 920.30,480.03 922.10,479.67 922.50,480.33 923.35,475.90 923.65,475.90 924.50,480.58 926.30,479.72 928.10,480.63 929.55,480.04 930.60,490.90 930.90,490.90 931.95,479.81 929.60,480.41 930.65,490.80 930.95,490.80 932.00,480.07 933.80,479.67 935.60,480.10 937.40,479.77 939.20,480.06 941.00,480.11 942.80,480.07 944.60,480.34 946.40,479.86 948.20,479.55 950.00,479.54 951.80,479.57 953.60,480.23 955.40,479.98 957.20,480.69 959.00,480.21 960.80,480.53 962.60,480.97 964.40,479.50 966.20,479.43 968.00,479.62 969.80,480.02 971.60,480.32 973.40,480.59 975.20,479.96 977.00,480.94 978.80,479.40 980.60,480.74 982.40,479.74 984.20,480.80 986.00,479.45 987.80,480.94 989.60,480.62 991.40,480.98 993.20,480.33 995.00,479.68 996.80,480.95 998.60,480.11 1000.40,479.53 1002.20,480.37 1004.00,480.20 1005.80,480.16 1007.60,479.65 1009.40,479.60 1011.20,480.33 1013.00,480.12 1014.80,479.60 1016.60,480.10 1018.40,480.56 1020.20,480.54 1022.00,480.15 1023.80,480.03 1025.60,479.98 1027.40,479.76 1029.20,479.72 1031.00,480.11 1032.80,479.57 1034.60,480.56 1036.40,480.53 1038.20,480.38 1040.00,479.44 1041.80,479.98 1043.60,480.09 1045.40,479.55 1047.20,480.95 1049.00,480.61 1050.80,480.20 1052.60,480.53 1054.40,479.72 1056.20,479.77 1058.00,480.24 1059.80,480.59 1061.60,480.44 1063.20,479.81 1064.25,489.80 1064.55,489.80 1065.60,480.29 1067.40,480.85 1069.20,480.59 1071.00,480.88 1072.80,480.97 1074.60,479.76 1076.40,479.87 1078.20,480.28 1080.00,480.96 1081.80,479.99 1083.60,480.91 1085.40,480.76 1087.20,480.23 1087.90,480.30 1088.75,483.00 1089.05,483.00 1089.90,480.57 1091.00,480.43 1091.85,477.50 1092.15,477.50 1093.00,480.04 1094.80,480.75 1096.60,479.71 1098.40,479.99 1100.20,480.93 1102.00,480.76 1103.80,479.90 1105.50,480.03 1106.35,470.50 1106.65,470.50 1107.50,480.29 1107.60,480.47 1108.45,461.70 1108.75,461.70 1109.60,480.35 1111.40,480.90 1113.20,480.56 1115.00,480.71 1116.80,480.37 1118.60,479.98 1120.40,480.08 1122.20,480.18 1124.00,480.25 1125.80,480.74 1127.60,479.83 1128.50,479.85 1129.35,477.00 1129.65,477.00 1130.50,480.39 1132.30,479.83 1134.10,480.07 1135.90,479.59 1137.70,480.73 1139.50,479.84 1141.30,479.87 1143.10,480.69 1144.90,480.21 1146.70,479.84 1148.50,480.82 1150.30,480.06 1152.10,479.98 1153.90,480.94 1155.70,480.66 1157.50,480.60 1158.70,480.00 1159.55,476.50 1159.85,476.50 1160.70,480.45 1162.50,480.24 1164.30,480.33 1166.10,480.15 1167.90,480.31 1169.70,480.32 1171.50,480.16 1173.30,480.26 1175.10,480.31 1176.90,480.40 1178.70,480.37 1180.50,480.31 1182.10,480.13 1182.85,490.80 1183.15,490.80 1183.90,480.22 1185.20,480.24 1185.85,486.00 1186.15,486.00 1186.80,480.12 1187.60,480.19 1188.35,490.50 1188.65,490.50 1189.40,480.27 1191.00,480.28 1191.85,477.30 1192.15,477.30 1193.00,480.29 1194.80,480.04 1196.60,480.24 1198.40,480.35 1200.20,480.26 1202.00,480.13 1203.80,480.02 1205.60,480.37 1207.40,480.34 1209.20,480.26 1211.00,480.15 1212.80,480.33 1214.60,480.33 1216.40,480.29 1218.20,480.24 1219.60,480.16 1220.45,490.80 1220.75,490.80 1221.60,480.16 1223.40,480.14 1225.20,480.13 1227.00,480.21 1228.80,480.05 1230.60,480.29 1231.00,480.17 1231.85,491.50 1232.15,491.50 1233.00,480.13 1234.80,480.10 1236.60,480.16 1237.50,480.19 1238.15,490.00 1238.45,490.00 1239.10,480.26 1239.30,480.12 1239.85,477.50 1240.15,477.50 1240.70,480.14 1240.80,480.16 1241.35,490.00 1241.65,490.00 1242.20,480.14 1243.80,480.20" fill="none" stroke="#F2495C" stroke-width="2.0" stroke-linejoin="round" stroke-opacity="1.0"/></svg><div class="a" style="left:644.33px;top:540.00px;width:599.00px;height:84.00px;overflow:hidden"><div class="t" style="left:37.97px;top:5.80px;font-size:12.4px;letter-spacing:0.450px;color:#6e9fff;">Name</div><div class="t" style="left:448.91px;top:5.80px;font-size:12.4px;letter-spacing:0.450px;color:#6e9fff;">Mean</div><div class="t" style="left:544.85px;top:5.80px;font-size:12.4px;letter-spacing:0.450px;color:#6e9fff;">Max</div><div class="a" style="left:7.87px;top:23.50px;width:590.80px;height:1.00px;background:rgba(204,204,220,0.12);"></div><div class="a" style="left:15.37px;top:33.80px;width:14.20px;height:4.00px;background:#73BF69;border-radius:2px;"></div><div class="t" style="left:37.97px;top:29.60px;font-size:12.4px;letter-spacing:0.450px;">2xx</div><div class="t" style="left:439.93px;top:29.60px;font-size:12.4px;letter-spacing:0.450px;">0.978 req/s</div><div class="t" style="left:530.98px;top:29.60px;font-size:12.4px;letter-spacing:0.450px;">1.72 req/s</div><div class="a" style="left:7.87px;top:47.00px;width:590.80px;height:1.00px;background:rgba(204,204,220,0.12);"></div><div class="a" style="left:15.37px;top:57.30px;width:14.20px;height:4.00px;background:#5794F2;border-radius:2px;"></div><div class="t" style="left:37.97px;top:53.10px;font-size:12.4px;letter-spacing:0.450px;">3xx</div><div class="t" style="left:439.93px;top:53.10px;font-size:12.4px;letter-spacing:0.450px;">0.167 req/s</div><div class="t" style="left:530.98px;top:53.10px;font-size:12.4px;letter-spacing:0.450px;">1.39 req/s</div><div class="a" style="left:7.87px;top:70.50px;width:590.80px;height:1.00px;background:rgba(204,204,220,0.12);"></div><div class="a" style="left:15.37px;top:80.80px;width:14.20px;height:4.00px;background:#F2CC0C;border-radius:2px;"></div><div class="t" style="left:37.97px;top:76.60px;font-size:12.4px;letter-spacing:0.450px;">4xx</div><div class="t" style="left:432.58px;top:76.60px;font-size:12.4px;letter-spacing:0.450px;">0.0185 req/s</div><div class="t" style="left:523.63px;top:76.60px;font-size:12.4px;letter-spacing:0.450px;">0.233 req/s</div></div><div class="a" style="left:1243.30px;top:541.60px;width:9.60px;height:82.00px;background:#2c2c2c;"></div><svg class="a" style="left:1243.30px;top:541.60px;" width="10" height="10" viewBox="0 0 10 10"><polygon points="1.9,7.0 4.8,3.9 7.7,7.0" fill="#a3a3a3"/></svg><svg class="a" style="left:1243.30px;top:613.60px;" width="10" height="10" viewBox="0 0 10 10"><polygon points="1.9,3.0 4.8,6.1 7.7,3.0" fill="#a3a3a3"/></svg><div class="a" style="left:1245.20px;top:553.00px;width:5.80px;height:41.00px;background:#a0a0a0;border-radius:2.9px;"></div><div class="a" style="left:1305.90px;top:518.00px;width:566.60px;height:1.00px;background:rgba(204,204,220,0.1);"></div><div class="a" style="left:1305.90px;top:496.00px;width:566.60px;height:1.00px;background:rgba(204,204,220,0.1);"></div><div class="a" style="left:1305.90px;top:474.00px;width:566.60px;height:1.00px;background:rgba(204,204,220,0.1);"></div><div class="a" style="left:1305.90px;top:451.00px;width:566.60px;height:1.00px;background:rgba(204,204,220,0.1);"></div><div class="a" style="left:1305.90px;top:428.00px;width:566.60px;height:1.00px;background:rgba(204,204,220,0.1);"></div><div class="a" style="left:1305.90px;top:405.00px;width:566.60px;height:1.00px;background:rgba(204,204,220,0.1);"></div><div class="a" style="left:1331.00px;top:394.80px;width:1.00px;height:128.20px;background:rgba(204,204,220,0.1);"></div><div class="a" style="left:1493.00px;top:394.80px;width:1.00px;height:128.20px;background:rgba(204,204,220,0.1);"></div><div class="a" style="left:1655.00px;top:394.80px;width:1.00px;height:128.20px;background:rgba(204,204,220,0.1);"></div><div class="a" style="left:1817.00px;top:394.80px;width:1.00px;height:128.20px;background:rgba(204,204,220,0.1);"></div><div class="t" style="left:1283.56px;top:511.80px;font-size:12.4px;letter-spacing:0.350px;">0 s</div><div class="t" style="left:1283.56px;top:489.80px;font-size:12.4px;letter-spacing:0.350px;">1 s</div><div class="t" style="left:1283.56px;top:467.80px;font-size:12.4px;letter-spacing:0.350px;">2 s</div><div class="t" style="left:1283.56px;top:444.80px;font-size:12.4px;letter-spacing:0.350px;">3 s</div><div class="t" style="left:1283.56px;top:421.80px;font-size:12.4px;letter-spacing:0.350px;">4 s</div><div class="t" style="left:1283.56px;top:398.80px;font-size:12.4px;letter-spacing:0.350px;">5 s</div><div class="t" style="left:1315.29px;top:528.30px;font-size:12.4px;letter-spacing:0.350px;">03/19</div><div class="t" style="left:1477.29px;top:528.30px;font-size:12.4px;letter-spacing:0.350px;">03/21</div><div class="t" style="left:1639.29px;top:528.30px;font-size:12.4px;letter-spacing:0.350px;">03/23</div><div class="t" style="left:1801.29px;top:528.30px;font-size:12.4px;letter-spacing:0.350px;">03/25</div><svg class="a" style="left:1300.00px;top:390.00px;" width="580.00" height="135.00" viewBox="1300.00 390.00 580.00 135.00"><path d="M1306.50,514.95 L1308.50,515.06 L1310.50,514.17 L1312.50,514.97 L1314.50,515.01 L1316.50,515.09 L1318.40,514.84 L1319.85,498.90 L1320.15,498.90 L1321.60,515.01 L1323.60,514.59 L1325.60,515.02 L1327.60,516.19 L1329.60,516.40 L1331.60,513.86 L1333.60,516.91 L1335.60,516.79 L1337.60,514.80 L1339.60,517.08 L1341.60,517.06 L1343.60,516.75 L1345.60,516.72 L1347.60,516.26 L1349.60,516.12 L1351.60,516.63 L1353.60,516.16 L1355.60,516.29 L1357.60,516.34 L1359.60,516.13 L1360.25,515.61 L1361.55,454.40 L1361.85,454.40 L1363.15,516.57 L1365.15,516.94 L1367.15,514.47 L1369.15,516.74 L1371.15,516.60 L1373.15,516.76 L1374.65,514.98 L1375.95,404.70 L1376.25,404.70 L1377.55,516.49 L1379.55,516.04 L1381.55,517.10 L1383.55,515.52 L1385.55,516.81 L1387.55,516.42 L1389.55,516.33 L1391.55,516.39 L1393.55,516.17 L1395.55,516.87 L1397.55,515.46 L1399.55,516.95 L1401.55,516.49 L1403.55,515.32 L1405.55,516.95 L1407.55,516.10 L1409.55,516.31 L1411.55,517.01 L1413.55,516.57 L1415.55,517.08 L1417.55,516.50 L1419.55,516.17 L1421.55,516.73 L1422.55,516.74 L1423.75,405.00 L1424.05,405.00 L1425.25,516.48 L1427.25,516.19 L1429.25,516.43 L1431.25,517.06 L1433.25,516.86 L1435.25,516.22 L1437.25,516.35 L1439.25,516.20 L1441.25,516.16 L1443.25,516.90 L1445.25,516.28 L1447.25,516.66 L1449.25,516.55 L1451.25,516.29 L1453.25,514.91 L1455.25,516.23 L1455.35,516.67 L1456.55,405.00 L1456.85,405.00 L1458.05,516.41 L1460.05,516.52 L1460.35,516.46 L1461.55,405.00 L1461.85,405.00 L1463.05,516.48 L1465.05,517.07 L1467.05,516.90 L1469.05,516.40 L1471.05,516.98 L1473.05,516.31 L1475.05,516.49 L1477.05,516.95 L1479.05,516.74 L1481.05,516.20 L1483.05,515.61 L1485.05,516.31 L1487.05,516.36 L1489.05,516.87 L1491.05,516.43 L1493.05,516.40 L1495.05,516.17 L1497.05,516.19 L1499.05,516.68 L1501.05,516.34 L1503.05,516.70 L1505.05,516.47 L1507.05,516.55 L1508.45,516.83 L1509.65,405.00 L1509.95,405.00 L1511.15,516.59 L1513.15,516.67 L1515.15,516.97 L1517.15,516.28 L1519.15,516.25 L1521.15,517.01 L1523.15,516.92 L1525.15,516.35 L1527.15,516.29 L1529.15,516.84 L1529.45,516.82 L1530.65,405.00 L1530.95,405.00 L1532.15,516.45 L1534.15,517.05 L1536.15,516.98 L1538.15,516.70 L1538.45,516.56 L1539.65,405.00 L1539.95,405.00 L1541.15,516.40 L1543.15,516.14 L1545.15,517.06 L1547.15,516.34 L1549.15,516.80 L1551.15,516.36 L1553.15,514.75 L1555.15,516.70 L1557.15,516.39 L1559.15,516.28 L1561.15,516.82 L1563.15,516.17 L1565.15,515.21 L1567.15,515.82 L1569.15,516.95 L1569.45,516.66 L1570.65,405.00 L1570.95,405.00 L1572.15,516.49 L1574.15,517.02 L1576.15,514.43 L1578.15,516.12 L1580.15,516.37 L1582.15,516.55 L1584.15,516.16 L1584.65,516.44 L1585.85,405.00 L1586.15,405.00 L1587.35,516.53 L1589.35,516.67 L1591.35,516.23 L1593.35,516.46 L1595.35,516.99 L1597.35,517.08 L1599.35,516.76 L1599.65,516.70 L1600.85,405.00 L1601.15,405.00 L1602.35,515.93 L1601.95,515.81 L1603.15,405.00 L1603.45,405.00 L1604.65,515.37 L1606.65,514.25 L1607.40,516.81 L1608.60,405.00 L1608.90,405.00 L1610.10,516.70 L1612.10,517.06 L1614.10,516.12 L1616.10,516.74 L1617.60,516.59 L1618.75,462.20 L1619.05,462.20 L1620.20,516.72 L1622.20,516.42 L1624.20,517.10 L1626.20,516.18 L1628.20,516.65 L1629.65,516.72 L1630.85,405.00 L1631.15,405.00 L1632.35,516.80 L1634.35,515.88 L1636.35,516.80 L1638.35,516.89 L1640.35,517.02 L1642.35,516.45 L1644.35,516.79 L1646.35,517.00 L1648.35,516.97 L1648.85,516.56 L1650.05,405.00 L1650.35,405.00 L1651.55,516.75 L1653.55,516.96 L1655.55,516.67 L1657.55,514.75 L1659.55,516.48 L1661.55,516.68 L1663.55,516.71 L1665.55,516.18 L1667.55,516.74 L1669.55,517.09 L1671.55,516.98 L1673.55,516.83 L1675.55,516.49 L1677.55,516.84 L1679.55,516.68 L1681.55,516.54 L1683.55,516.94 L1685.55,516.18 L1686.35,516.73 L1687.55,407.50 L1687.85,407.50 L1689.05,516.36 L1690.55,516.65 L1691.75,405.00 L1692.05,405.00 L1693.25,516.59 L1695.25,516.33 L1697.25,516.80 L1699.25,516.60 L1701.25,516.71 L1703.25,517.02 L1704.25,516.48 L1705.45,405.00 L1705.75,405.00 L1706.95,516.36 L1708.65,516.50 L1709.85,405.00 L1710.15,405.00 L1711.35,516.69 L1713.35,516.30 L1715.35,516.27 L1717.35,517.01 L1718.35,516.68 L1719.55,405.00 L1719.85,405.00 L1721.05,516.57 L1723.05,516.99 L1724.75,516.51 L1725.85,494.20 L1726.15,494.20 L1727.25,516.68 L1729.25,516.30 L1731.25,515.80 L1733.25,516.91 L1735.25,517.01 L1737.25,516.98 L1739.25,516.48 L1741.25,516.68 L1743.25,516.42 L1745.25,516.24 L1747.25,516.60 L1748.35,516.77 L1749.55,405.00 L1749.85,405.00 L1751.05,516.77 L1753.05,516.81 L1755.05,517.05 L1755.55,516.49 L1756.75,405.00 L1757.05,405.00 L1758.25,516.43 L1760.25,516.55 L1762.25,514.89 L1764.25,516.31 L1766.25,514.17 L1768.25,516.73 L1770.25,516.59 L1772.25,516.42 L1774.25,516.94 L1776.25,517.08 L1778.25,516.55 L1779.15,516.39 L1780.45,501.25 L1780.75,501.25 L1782.05,516.37 L1784.05,516.97 L1786.05,516.14 L1788.05,516.81 L1790.05,516.67 L1792.05,516.41 L1794.05,516.89 L1796.05,516.12 L1798.05,516.24 L1800.05,516.55 L1802.05,516.12 L1804.05,516.93 L1806.05,516.34 L1808.05,516.24 L1810.05,516.15 L1812.05,516.73 L1814.05,516.55 L1815.15,516.66 L1816.45,405.00 L1816.75,405.00 L1818.05,516.68 L1820.05,516.91 L1822.05,515.58 L1824.05,516.78 L1826.05,516.30 L1828.05,516.58 L1830.05,516.28 L1832.05,516.11 L1834.05,516.57 L1836.05,516.81 L1838.05,516.28 L1840.05,516.37 L1842.05,516.45 L1844.05,516.80 L1846.05,516.62 L1848.05,516.71 L1850.05,516.86 L1852.05,516.49 L1854.05,516.89 L1856.05,517.01 L1858.05,516.19 L1860.05,516.34 L1862.05,516.82 L1864.05,516.23 L1865.45,516.58 L1866.75,405.00 L1867.05,405.00 L1868.35,516.66 L1870.35,517.01 L1871.50,516.60 L1871.50,518.40 L1306.50,518.40 Z" fill="#F2495C" fill-opacity="0.1"/><polyline points="1306.50,518.20 1871.50,518.20" fill="none" stroke="#73BF69" stroke-width="1.3" stroke-linejoin="round" stroke-opacity="1.0"/><polyline points="1306.50,515.36 1309.50,515.61 1312.50,515.61 1315.50,515.71 1318.50,515.31 1321.50,515.34 1324.50,517.19 1327.50,517.24 1330.50,517.54 1333.50,517.18 1336.50,517.42 1339.50,517.23 1342.50,517.28 1345.50,517.36 1348.50,517.60 1351.50,517.47 1354.50,517.11 1357.50,517.27 1360.50,517.19 1363.50,517.62 1366.50,517.59 1369.50,517.58 1372.50,517.60 1375.50,517.55 1378.50,517.67 1381.50,517.58 1384.50,517.25 1387.50,517.61 1390.50,517.39 1393.50,517.55 1396.50,517.44 1399.50,517.36 1402.50,517.32 1405.50,517.36 1408.50,517.29 1411.50,517.17 1414.50,517.59 1417.50,517.58 1420.50,517.69 1423.50,517.51 1426.50,517.43 1429.50,517.55 1432.50,517.18 1435.50,517.51 1438.50,517.37 1441.50,517.21 1444.50,517.22 1447.50,517.41 1450.50,517.25 1453.50,517.38 1456.50,517.46 1459.50,517.34 1462.50,517.18 1465.50,517.39 1468.50,517.24 1471.50,517.24 1474.50,517.22 1477.50,517.32 1480.50,517.14 1483.50,517.49 1486.50,517.67 1489.50,517.33 1492.50,517.53 1495.50,517.66 1498.50,517.13 1501.50,517.19 1504.50,517.58 1507.50,517.60 1510.50,517.48 1513.50,517.20 1516.50,517.35 1519.50,517.62 1522.50,517.63 1525.50,517.58 1528.50,517.22 1531.50,517.61 1534.50,517.32 1537.50,517.53 1540.50,517.18 1543.50,517.68 1546.50,517.46 1549.50,517.53 1552.50,517.23 1555.50,517.47 1558.50,517.45 1561.50,517.45 1564.50,517.32 1567.50,517.54 1570.50,517.30 1573.50,517.28 1576.50,517.20 1579.50,517.51 1582.50,517.17 1585.50,517.24 1588.50,517.14 1591.50,517.49 1594.50,517.43 1597.50,517.43 1600.50,517.12 1603.50,517.36 1606.50,517.31 1609.50,517.16 1612.50,517.10 1615.50,517.70 1618.50,517.17 1621.50,517.28 1624.50,517.26 1627.50,517.46 1630.50,517.15 1633.50,517.38 1636.50,517.32 1639.50,517.60 1642.50,517.10 1645.50,517.30 1648.50,517.40 1651.50,517.68 1654.50,517.41 1657.50,517.38 1660.50,517.50 1663.50,517.28 1666.50,517.12 1669.50,517.40 1672.50,517.65 1675.50,517.54 1678.50,517.25 1681.50,517.51 1684.50,517.61 1687.50,517.26 1690.50,517.45 1693.50,517.31 1696.50,517.25 1699.50,517.27 1702.50,517.22 1705.50,517.31 1708.50,517.12 1711.50,517.34 1714.50,517.15 1717.50,517.55 1720.50,517.46 1723.50,517.10 1726.50,517.56 1729.50,517.21 1732.50,517.39 1735.50,517.43 1738.50,517.30 1741.50,517.27 1744.50,517.36 1747.50,517.18 1750.50,517.62 1753.50,517.17 1756.50,517.59 1759.50,517.23 1762.50,517.28 1765.50,517.33 1768.50,517.12 1771.50,517.18 1774.50,517.32 1777.50,517.37 1780.50,517.63 1783.50,517.69 1786.50,517.13 1789.50,517.42 1792.50,517.18 1795.50,517.58 1798.50,517.29 1801.50,517.64 1804.50,517.43 1807.50,517.18 1810.50,517.10 1813.50,517.25 1816.50,517.62 1819.50,517.19 1822.50,517.39 1825.50,517.32 1828.50,517.31 1831.50,517.58 1834.50,517.23 1837.50,517.53 1840.50,517.50 1843.50,517.66 1846.50,517.41 1849.50,517.65 1852.50,517.36 1855.50,517.44 1858.50,517.47 1861.50,517.60 1864.50,517.64 1867.50,517.17 1870.50,517.18 1871.50,517.40" fill="none" stroke="#FADE2A" stroke-width="1.3" stroke-linejoin="round" stroke-opacity="1.0"/><polyline points="1306.50,514.95 1308.50,515.06 1310.50,514.17 1312.50,514.97 1314.50,515.01 1316.50,515.09 1318.40,514.84 1319.85,498.90 1320.15,498.90 1321.60,515.01 1323.60,514.59 1325.60,515.02 1327.60,516.19 1329.60,516.40 1331.60,513.86 1333.60,516.91 1335.60,516.79 1337.60,514.80 1339.60,517.08 1341.60,517.06 1343.60,516.75 1345.60,516.72 1347.60,516.26 1349.60,516.12 1351.60,516.63 1353.60,516.16 1355.60,516.29 1357.60,516.34 1359.60,516.13 1360.25,515.61 1361.55,454.40 1361.85,454.40 1363.15,516.57 1365.15,516.94 1367.15,514.47 1369.15,516.74 1371.15,516.60 1373.15,516.76 1374.65,514.98 1375.95,404.70 1376.25,404.70 1377.55,516.49 1379.55,516.04 1381.55,517.10 1383.55,515.52 1385.55,516.81 1387.55,516.42 1389.55,516.33 1391.55,516.39 1393.55,516.17 1395.55,516.87 1397.55,515.46 1399.55,516.95 1401.55,516.49 1403.55,515.32 1405.55,516.95 1407.55,516.10 1409.55,516.31 1411.55,517.01 1413.55,516.57 1415.55,517.08 1417.55,516.50 1419.55,516.17 1421.55,516.73 1422.55,516.74 1423.75,405.00 1424.05,405.00 1425.25,516.48 1427.25,516.19 1429.25,516.43 1431.25,517.06 1433.25,516.86 1435.25,516.22 1437.25,516.35 1439.25,516.20 1441.25,516.16 1443.25,516.90 1445.25,516.28 1447.25,516.66 1449.25,516.55 1451.25,516.29 1453.25,514.91 1455.25,516.23 1455.35,516.67 1456.55,405.00 1456.85,405.00 1458.05,516.41 1460.05,516.52 1460.35,516.46 1461.55,405.00 1461.85,405.00 1463.05,516.48 1465.05,517.07 1467.05,516.90 1469.05,516.40 1471.05,516.98 1473.05,516.31 1475.05,516.49 1477.05,516.95 1479.05,516.74 1481.05,516.20 1483.05,515.61 1485.05,516.31 1487.05,516.36 1489.05,516.87 1491.05,516.43 1493.05,516.40 1495.05,516.17 1497.05,516.19 1499.05,516.68 1501.05,516.34 1503.05,516.70 1505.05,516.47 1507.05,516.55 1508.45,516.83 1509.65,405.00 1509.95,405.00 1511.15,516.59 1513.15,516.67 1515.15,516.97 1517.15,516.28 1519.15,516.25 1521.15,517.01 1523.15,516.92 1525.15,516.35 1527.15,516.29 1529.15,516.84 1529.45,516.82 1530.65,405.00 1530.95,405.00 1532.15,516.45 1534.15,517.05 1536.15,516.98 1538.15,516.70 1538.45,516.56 1539.65,405.00 1539.95,405.00 1541.15,516.40 1543.15,516.14 1545.15,517.06 1547.15,516.34 1549.15,516.80 1551.15,516.36 1553.15,514.75 1555.15,516.70 1557.15,516.39 1559.15,516.28 1561.15,516.82 1563.15,516.17 1565.15,515.21 1567.15,515.82 1569.15,516.95 1569.45,516.66 1570.65,405.00 1570.95,405.00 1572.15,516.49 1574.15,517.02 1576.15,514.43 1578.15,516.12 1580.15,516.37 1582.15,516.55 1584.15,516.16 1584.65,516.44 1585.85,405.00 1586.15,405.00 1587.35,516.53 1589.35,516.67 1591.35,516.23 1593.35,516.46 1595.35,516.99 1597.35,517.08 1599.35,516.76 1599.65,516.70 1600.85,405.00 1601.15,405.00 1602.35,515.93 1601.95,515.81 1603.15,405.00 1603.45,405.00 1604.65,515.37 1606.65,514.25 1607.40,516.81 1608.60,405.00 1608.90,405.00 1610.10,516.70 1612.10,517.06 1614.10,516.12 1616.10,516.74 1617.60,516.59 1618.75,462.20 1619.05,462.20 1620.20,516.72 1622.20,516.42 1624.20,517.10 1626.20,516.18 1628.20,516.65 1629.65,516.72 1630.85,405.00 1631.15,405.00 1632.35,516.80 1634.35,515.88 1636.35,516.80 1638.35,516.89 1640.35,517.02 1642.35,516.45 1644.35,516.79 1646.35,517.00 1648.35,516.97 1648.85,516.56 1650.05,405.00 1650.35,405.00 1651.55,516.75 1653.55,516.96 1655.55,516.67 1657.55,514.75 1659.55,516.48 1661.55,516.68 1663.55,516.71 1665.55,516.18 1667.55,516.74 1669.55,517.09 1671.55,516.98 1673.55,516.83 1675.55,516.49 1677.55,516.84 1679.55,516.68 1681.55,516.54 1683.55,516.94 1685.55,516.18 1686.35,516.73 1687.55,407.50 1687.85,407.50 1689.05,516.36 1690.55,516.65 1691.75,405.00 1692.05,405.00 1693.25,516.59 1695.25,516.33 1697.25,516.80 1699.25,516.60 1701.25,516.71 1703.25,517.02 1704.25,516.48 1705.45,405.00 1705.75,405.00 1706.95,516.36 1708.65,516.50 1709.85,405.00 1710.15,405.00 1711.35,516.69 1713.35,516.30 1715.35,516.27 1717.35,517.01 1718.35,516.68 1719.55,405.00 1719.85,405.00 1721.05,516.57 1723.05,516.99 1724.75,516.51 1725.85,494.20 1726.15,494.20 1727.25,516.68 1729.25,516.30 1731.25,515.80 1733.25,516.91 1735.25,517.01 1737.25,516.98 1739.25,516.48 1741.25,516.68 1743.25,516.42 1745.25,516.24 1747.25,516.60 1748.35,516.77 1749.55,405.00 1749.85,405.00 1751.05,516.77 1753.05,516.81 1755.05,517.05 1755.55,516.49 1756.75,405.00 1757.05,405.00 1758.25,516.43 1760.25,516.55 1762.25,514.89 1764.25,516.31 1766.25,514.17 1768.25,516.73 1770.25,516.59 1772.25,516.42 1774.25,516.94 1776.25,517.08 1778.25,516.55 1779.15,516.39 1780.45,501.25 1780.75,501.25 1782.05,516.37 1784.05,516.97 1786.05,516.14 1788.05,516.81 1790.05,516.67 1792.05,516.41 1794.05,516.89 1796.05,516.12 1798.05,516.24 1800.05,516.55 1802.05,516.12 1804.05,516.93 1806.05,516.34 1808.05,516.24 1810.05,516.15 1812.05,516.73 1814.05,516.55 1815.15,516.66 1816.45,405.00 1816.75,405.00 1818.05,516.68 1820.05,516.91 1822.05,515.58 1824.05,516.78 1826.05,516.30 1828.05,516.58 1830.05,516.28 1832.05,516.11 1834.05,516.57 1836.05,516.81 1838.05,516.28 1840.05,516.37 1842.05,516.45 1844.05,516.80 1846.05,516.62 1848.05,516.71 1850.05,516.86 1852.05,516.49 1854.05,516.89 1856.05,517.01 1858.05,516.19 1860.05,516.34 1862.05,516.82 1864.05,516.23 1865.45,516.58 1866.75,405.00 1867.05,405.00 1868.35,516.66 1870.35,517.01 1871.50,516.60" fill="none" stroke="#F2495C" stroke-width="1.45" stroke-linejoin="round" stroke-opacity="1.0"/><rect x="1371.6" y="508" width="1.4" height="12" fill="#181b1f"/><rect x="1387.2" y="510" width="1.4" height="10" fill="#181b1f"/></svg><div class="a" style="left:1271.67px;top:540.00px;width:599.00px;height:84.00px;overflow:hidden"><div class="t" style="left:37.73px;top:5.80px;font-size:12.4px;letter-spacing:0.450px;color:#6e9fff;">Name</div><div class="t" style="left:494.97px;top:5.80px;font-size:12.4px;letter-spacing:0.450px;color:#6e9fff;">Mean</div><div class="t" style="left:565.41px;top:5.80px;font-size:12.4px;letter-spacing:0.450px;color:#6e9fff;">Max</div><div class="a" style="left:7.63px;top:23.50px;width:590.30px;height:1.00px;background:rgba(204,204,220,0.12);"></div><div class="a" style="left:15.53px;top:33.80px;width:14.20px;height:4.00px;background:#73BF69;border-radius:2px;"></div><div class="t" style="left:37.73px;top:29.60px;font-size:12.4px;letter-spacing:0.450px;">P50</div><div class="t" style="left:480.02px;top:29.60px;font-size:12.4px;letter-spacing:0.450px;">50.4 ms</div><div class="t" style="left:542.72px;top:29.60px;font-size:12.4px;letter-spacing:0.450px;">57.6 ms</div><div class="a" style="left:7.63px;top:47.00px;width:590.30px;height:1.00px;background:rgba(204,204,220,0.12);"></div><div class="a" style="left:15.53px;top:57.30px;width:14.20px;height:4.00px;background:#FADE2A;border-radius:2px;"></div><div class="t" style="left:37.73px;top:53.10px;font-size:12.4px;letter-spacing:0.450px;">P95</div><div class="t" style="left:483.92px;top:53.10px;font-size:12.4px;letter-spacing:0.450px;">105 ms</div><div class="t" style="left:572.09px;top:53.10px;font-size:12.4px;letter-spacing:0.450px;">5 s</div><div class="a" style="left:7.63px;top:70.50px;width:590.30px;height:1.00px;background:rgba(204,204,220,0.12);"></div><div class="a" style="left:15.53px;top:80.80px;width:14.20px;height:4.00px;background:#F2495C;border-radius:2px;"></div><div class="t" style="left:37.73px;top:76.60px;font-size:12.4px;letter-spacing:0.450px;">P99</div><div class="t" style="left:483.92px;top:76.60px;font-size:12.4px;letter-spacing:0.450px;">307 ms</div><div class="t" style="left:572.09px;top:76.60px;font-size:12.4px;letter-spacing:0.450px;">5 s</div></div><div class="a" style="left:1870.60px;top:541.50px;width:9.60px;height:82.20px;background:#2c2c2c;"></div><svg class="a" style="left:1870.60px;top:541.50px;" width="10" height="10" viewBox="0 0 10 10"><polygon points="1.9,7.0 4.8,3.9 7.7,7.0" fill="#a3a3a3"/></svg><svg class="a" style="left:1870.60px;top:613.70px;" width="10" height="10" viewBox="0 0 10 10"><polygon points="1.9,3.0 4.8,6.1 7.7,3.0" fill="#a3a3a3"/></svg><div class="a" style="left:1872.50px;top:553.50px;width:5.80px;height:51.10px;background:#a0a0a0;border-radius:2.9px;"></div><div class="a" style="left:85.20px;top:860.00px;width:533.00px;height:1.00px;background:rgba(204,204,220,0.1);"></div><div class="a" style="left:85.20px;top:836.00px;width:533.00px;height:1.00px;background:rgba(204,204,220,0.1);"></div><div class="a" style="left:85.20px;top:811.00px;width:533.00px;height:1.00px;background:rgba(204,204,220,0.1);"></div><div class="a" style="left:85.20px;top:786.00px;width:533.00px;height:1.00px;background:rgba(204,204,220,0.1);"></div><div class="a" style="left:85.20px;top:761.00px;width:533.00px;height:1.00px;background:rgba(204,204,220,0.1);"></div><div class="a" style="left:85.20px;top:736.00px;width:533.00px;height:1.00px;background:rgba(204,204,220,0.1);"></div><div class="a" style="left:109.00px;top:736.30px;width:1.00px;height:128.70px;background:rgba(204,204,220,0.1);"></div><div class="a" style="left:261.00px;top:736.30px;width:1.00px;height:128.70px;background:rgba(204,204,220,0.1);"></div><div class="a" style="left:414.00px;top:736.30px;width:1.00px;height:128.70px;background:rgba(204,204,220,0.1);"></div><div class="a" style="left:566.00px;top:736.30px;width:1.00px;height:128.70px;background:rgba(204,204,220,0.1);"></div><div class="t" style="left:39.29px;top:853.80px;font-size:12.4px;letter-spacing:0.350px;">0 req/s</div><div class="t" style="left:28.25px;top:829.80px;font-size:12.4px;letter-spacing:0.350px;">0.5 req/s</div><div class="t" style="left:39.29px;top:804.80px;font-size:12.4px;letter-spacing:0.350px;">1 req/s</div><div class="t" style="left:28.25px;top:779.80px;font-size:12.4px;letter-spacing:0.350px;">1.5 req/s</div><div class="t" style="left:39.29px;top:754.80px;font-size:12.4px;letter-spacing:0.350px;">2 req/s</div><div class="t" style="left:28.25px;top:729.80px;font-size:12.4px;letter-spacing:0.350px;">2.5 req/s</div><div class="t" style="left:93.29px;top:869.60px;font-size:12.4px;letter-spacing:0.350px;">03/19</div><div class="t" style="left:245.29px;top:869.60px;font-size:12.4px;letter-spacing:0.350px;">03/21</div><div class="t" style="left:398.29px;top:869.60px;font-size:12.4px;letter-spacing:0.350px;">03/23</div><div class="t" style="left:550.29px;top:869.60px;font-size:12.4px;letter-spacing:0.350px;">03/25</div><svg class="a" style="left:80.00px;top:730.00px;" width="545.00" height="135.00" viewBox="80.00 730.00 545.00 135.00"><path d="M85.06,834.93 L87.22,834.33 L89.63,836.13 L91.44,843.96 L98.06,843.96 L99.87,856.60 L101.07,859.01 L101.07,861.00 L85.06,861.00 Z" fill="#C4162A" fill-opacity="0.12"/><path d="M85.42,821.68 L87.22,824.69 L90.84,820.48 L92.04,824.09 L94.05,823.89 L96.05,824.72 L98.06,824.69 L100.17,824.71 L102.27,824.37 L104.38,823.90 L106.49,824.09 L108.29,821.08 L113.71,821.08 L114.91,819.28 L115.52,855.39 L117.92,856.00 L119.13,821.68 L121.39,822.19 L123.64,822.35 L125.90,822.15 L128.16,822.29 L132.97,820.48 L135.38,821.08 L140.20,821.68 L145.01,818.67 L146.22,855.39 L146.22,861.00 L85.42,861.00 Z" fill="#3274D9" fill-opacity="0.1"/><path d="M149.83,855.39 L152.24,818.07 L154.04,820.48 L159.46,820.48 L161.87,856.60 L163.67,821.68 L165.67,823.48 L167.47,823.52 L169.27,823.43 L171.07,822.13 L172.87,822.95 L174.67,822.68 L176.47,822.85 L178.27,822.21 L180.07,822.31 L181.87,822.71 L183.67,822.35 L185.47,822.73 L187.27,822.04 L189.07,822.14 L190.87,823.14 L192.67,822.67 L194.47,822.82 L196.27,823.17 L198.07,822.57 L199.87,822.09 L201.67,823.25 L203.47,822.94 L205.27,823.05 L207.07,822.99 L208.87,823.55 L210.67,822.58 L212.47,823.22 L214.27,822.59 L216.07,822.92 L217.87,823.06 L219.67,822.50 L221.47,822.14 L223.27,822.76 L225.07,823.15 L226.87,822.94 L228.67,822.72 L230.47,823.03 L232.27,822.29 L234.07,822.29 L235.87,822.52 L237.67,823.31 L239.47,822.31 L241.27,822.18 L243.07,822.16 L244.87,822.06 L246.67,822.44 L248.47,822.92 L250.27,823.31 L251.70,822.66 L252.55,819.50 L252.85,819.50 L253.70,822.70 L255.50,822.46 L257.30,822.49 L259.10,823.24 L260.90,822.88 L262.70,822.41 L264.50,822.17 L266.30,823.25 L268.10,823.13 L269.90,823.33 L271.70,822.38 L273.50,822.87 L275.30,823.47 L277.10,822.95 L278.90,823.51 L280.70,822.27 L282.50,823.56 L284.30,822.09 L286.10,822.67 L287.90,822.04 L289.70,823.30 L291.50,823.10 L293.30,823.56 L295.10,823.29 L295.50,823.16 L296.35,819.00 L296.65,819.00 L297.50,822.83 L299.30,823.58 L301.10,823.20 L302.55,822.68 L303.60,839.80 L303.90,839.80 L304.95,823.18 L306.75,822.60 L308.55,822.31 L310.35,822.12 L312.15,822.75 L313.95,822.31 L315.75,823.49 L317.55,823.52 L319.35,822.35 L321.15,822.17 L322.95,822.85 L324.75,822.27 L326.55,822.87 L328.35,823.30 L330.15,822.40 L331.95,822.67 L333.75,823.44 L335.55,822.71 L337.35,822.55 L339.15,823.43 L340.95,823.30 L342.75,823.43 L344.55,823.10 L346.35,822.66 L348.15,823.11 L349.95,823.33 L351.75,823.02 L353.55,822.38 L355.35,822.47 L357.15,822.66 L358.95,823.23 L360.75,822.89 L362.55,822.88 L364.35,823.32 L366.15,822.17 L367.95,823.01 L369.75,822.53 L371.55,822.89 L373.35,823.34 L375.15,822.40 L376.95,823.52 L378.75,822.13 L380.55,822.90 L382.35,822.87 L384.15,822.38 L385.95,822.90 L387.75,822.75 L389.55,822.72 L391.35,823.15 L393.15,822.01 L394.95,822.60 L396.75,823.26 L398.55,822.23 L400.35,823.39 L402.15,822.33 L403.95,823.09 L405.75,822.28 L407.55,822.72 L409.35,822.68 L411.15,822.13 L412.95,823.12 L414.75,822.77 L416.55,823.10 L418.35,822.86 L420.15,822.89 L421.95,822.84 L423.75,822.48 L425.55,823.44 L427.35,822.14 L429.15,823.40 L430.95,823.38 L432.75,822.80 L434.55,823.24 L436.35,823.08 L436.40,822.88 L437.35,831.00 L437.65,831.00 L438.60,822.63 L440.40,822.51 L442.20,822.56 L444.00,822.48 L445.80,823.54 L447.60,822.55 L449.40,822.62 L451.20,822.67 L453.00,823.31 L454.80,822.76 L456.60,822.89 L458.40,822.41 L460.20,822.44 L461.00,822.47 L461.85,826.00 L462.15,826.00 L463.00,822.57 L464.10,822.61 L464.95,820.50 L465.25,820.50 L466.10,823.08 L467.90,822.80 L469.70,822.18 L471.50,822.74 L473.30,822.19 L475.10,822.91 L476.90,822.71 L477.80,823.09 L478.45,815.00 L478.75,815.00 L479.40,822.61 L480.00,823.08 L480.85,797.50 L481.15,797.50 L482.00,822.60 L483.80,823.57 L485.60,823.01 L487.40,822.07 L489.20,823.29 L491.00,822.44 L492.80,822.58 L494.60,822.23 L496.40,823.34 L498.20,822.14 L500.00,823.18 L501.80,822.63 L501.90,822.94 L502.75,820.00 L503.05,820.00 L503.90,822.63 L505.70,822.13 L507.50,823.46 L509.30,823.05 L511.10,822.27 L512.90,823.56 L514.70,823.46 L516.50,822.29 L518.30,822.03 L520.10,822.98 L521.90,822.22 L523.70,823.17 L525.50,822.75 L527.30,823.13 L529.10,822.91 L530.90,823.23 L531.80,823.06 L532.65,819.50 L532.95,819.50 L533.80,822.88 L535.60,823.63 L537.40,823.55 L539.20,823.49 L541.00,823.48 L542.80,823.71 L544.60,823.51 L546.40,823.58 L548.20,823.55 L550.00,823.64 L551.80,823.61 L553.60,823.71 L555.40,823.58 L555.70,823.58 L556.35,835.00 L556.65,835.00 L557.30,823.62 L557.90,823.64 L558.45,829.00 L558.75,829.00 L559.30,823.66 L559.20,823.57 L559.85,838.00 L560.15,838.00 L560.80,823.66 L562.60,823.74 L562.70,823.67 L563.35,837.00 L563.65,837.00 L564.30,823.54 L564.10,823.58 L564.95,820.00 L565.25,820.00 L566.10,823.64 L567.90,823.70 L569.70,823.46 L571.50,823.57 L573.30,823.67 L575.10,823.68 L576.90,823.61 L578.70,823.51 L580.50,823.57 L582.30,823.47 L584.10,823.54 L585.90,823.58 L587.70,823.70 L589.50,823.63 L591.30,823.57 L592.10,823.56 L593.05,838.60 L593.35,838.60 L594.30,823.57 L596.10,823.65 L597.90,823.58 L599.70,823.50 L601.50,823.70 L603.10,823.61 L604.05,840.00 L604.35,840.00 L605.30,823.67 L606.30,823.61 L606.85,832.00 L607.15,832.00 L607.70,823.62 L609.50,823.59 L610.25,840.00 L610.55,840.00 L611.30,823.62 L611.80,823.66 L612.35,820.00 L612.65,820.00 L613.20,823.67 L612.80,823.62 L613.35,838.00 L613.65,838.00 L614.20,823.59 L614.90,823.53 L615.45,839.00 L615.75,839.00 L616.30,823.65 L617.20,823.60 L617.20,861.00 L149.83,861.00 Z" fill="#3274D9" fill-opacity="0.1"/><polyline points="85.20,857.20 149.00,857.20" fill="none" stroke="#56A64B" stroke-width="1.5" stroke-linejoin="round" stroke-opacity="1.0"/><polyline points="85.20,858.60 617.20,858.60" fill="none" stroke="#8F3BB8" stroke-width="1.6" stroke-linejoin="round" stroke-opacity="1.0"/><polyline points="85.20,860.20 109.00,860.20" fill="none" stroke="#E0752D" stroke-width="1.6" stroke-linejoin="round" stroke-opacity="1.0"/><polyline points="109.00,859.90 146.50,859.90" fill="none" stroke="#C0D8FF" stroke-width="2.0" stroke-linejoin="round" stroke-opacity="1.0"/><polyline points="150.50,859.90 617.20,859.90" fill="none" stroke="#C0D8FF" stroke-width="2.0" stroke-linejoin="round" stroke-opacity="1.0"/><polyline points="153.00,861.20 617.20,861.20" fill="none" stroke="#E0B400" stroke-width="1.4" stroke-linejoin="round" stroke-opacity="1.0"/><polyline points="153.00,856.60 617.20,856.60" fill="none" stroke="#FFF899" stroke-width="2.0" stroke-linejoin="round" stroke-opacity="1.0"/><polyline points="85.06,834.93 87.22,834.33 89.63,836.13 91.44,843.96 98.06,843.96 99.87,856.60 101.07,859.01" fill="none" stroke="#C4162A" stroke-width="2.0" stroke-linejoin="round" stroke-opacity="1.0"/><polyline points="134.78,859.01 136.59,850.58 137.79,849.38 142.00,849.38 143.81,857.20" fill="none" stroke="#C4162A" stroke-width="2.0" stroke-linejoin="round" stroke-opacity="1.0"/><polyline points="477.40,858.00 478.30,846.50 478.90,846.50 479.80,858.00" fill="none" stroke="#C4162A" stroke-width="1.6" stroke-linejoin="round" stroke-opacity="1.0"/><polyline points="531.90,858.00 532.60,854.00 533.00,854.00 533.70,858.00" fill="none" stroke="#C4162A" stroke-width="1.4" stroke-linejoin="round" stroke-opacity="1.0"/><polyline points="93.24,857.80 94.45,842.15 95.65,857.80" fill="none" stroke="#CA95E5" stroke-width="2.0" stroke-linejoin="round" stroke-opacity="1.0"/><polyline points="85.42,821.68 87.22,824.69 90.84,820.48 92.04,824.09 94.05,823.89 96.05,824.72 98.06,824.69 100.17,824.71 102.27,824.37 104.38,823.90 106.49,824.09 108.29,821.08 113.71,821.08 114.91,819.28 115.52,855.39 117.92,856.00 119.13,821.68 121.39,822.19 123.64,822.35 125.90,822.15 128.16,822.29 132.97,820.48 135.38,821.08 140.20,821.68 145.01,818.67 146.22,855.39" fill="none" stroke="#3274D9" stroke-width="2.0" stroke-linejoin="round" stroke-opacity="1.0"/><polyline points="149.83,855.39 152.24,818.07 154.04,820.48 159.46,820.48 161.87,856.60 163.67,821.68 165.67,823.48 167.47,823.52 169.27,823.43 171.07,822.13 172.87,822.95 174.67,822.68 176.47,822.85 178.27,822.21 180.07,822.31 181.87,822.71 183.67,822.35 185.47,822.73 187.27,822.04 189.07,822.14 190.87,823.14 192.67,822.67 194.47,822.82 196.27,823.17 198.07,822.57 199.87,822.09 201.67,823.25 203.47,822.94 205.27,823.05 207.07,822.99 208.87,823.55 210.67,822.58 212.47,823.22 214.27,822.59 216.07,822.92 217.87,823.06 219.67,822.50 221.47,822.14 223.27,822.76 225.07,823.15 226.87,822.94 228.67,822.72 230.47,823.03 232.27,822.29 234.07,822.29 235.87,822.52 237.67,823.31 239.47,822.31 241.27,822.18 243.07,822.16 244.87,822.06 246.67,822.44 248.47,822.92 250.27,823.31 251.70,822.66 252.55,819.50 252.85,819.50 253.70,822.70 255.50,822.46 257.30,822.49 259.10,823.24 260.90,822.88 262.70,822.41 264.50,822.17 266.30,823.25 268.10,823.13 269.90,823.33 271.70,822.38 273.50,822.87 275.30,823.47 277.10,822.95 278.90,823.51 280.70,822.27 282.50,823.56 284.30,822.09 286.10,822.67 287.90,822.04 289.70,823.30 291.50,823.10 293.30,823.56 295.10,823.29 295.50,823.16 296.35,819.00 296.65,819.00 297.50,822.83 299.30,823.58 301.10,823.20 302.55,822.68 303.60,839.80 303.90,839.80 304.95,823.18 306.75,822.60 308.55,822.31 310.35,822.12 312.15,822.75 313.95,822.31 315.75,823.49 317.55,823.52 319.35,822.35 321.15,822.17 322.95,822.85 324.75,822.27 326.55,822.87 328.35,823.30 330.15,822.40 331.95,822.67 333.75,823.44 335.55,822.71 337.35,822.55 339.15,823.43 340.95,823.30 342.75,823.43 344.55,823.10 346.35,822.66 348.15,823.11 349.95,823.33 351.75,823.02 353.55,822.38 355.35,822.47 357.15,822.66 358.95,823.23 360.75,822.89 362.55,822.88 364.35,823.32 366.15,822.17 367.95,823.01 369.75,822.53 371.55,822.89 373.35,823.34 375.15,822.40 376.95,823.52 378.75,822.13 380.55,822.90 382.35,822.87 384.15,822.38 385.95,822.90 387.75,822.75 389.55,822.72 391.35,823.15 393.15,822.01 394.95,822.60 396.75,823.26 398.55,822.23 400.35,823.39 402.15,822.33 403.95,823.09 405.75,822.28 407.55,822.72 409.35,822.68 411.15,822.13 412.95,823.12 414.75,822.77 416.55,823.10 418.35,822.86 420.15,822.89 421.95,822.84 423.75,822.48 425.55,823.44 427.35,822.14 429.15,823.40 430.95,823.38 432.75,822.80 434.55,823.24 436.35,823.08 436.40,822.88 437.35,831.00 437.65,831.00 438.60,822.63 440.40,822.51 442.20,822.56 444.00,822.48 445.80,823.54 447.60,822.55 449.40,822.62 451.20,822.67 453.00,823.31 454.80,822.76 456.60,822.89 458.40,822.41 460.20,822.44 461.00,822.47 461.85,826.00 462.15,826.00 463.00,822.57 464.10,822.61 464.95,820.50 465.25,820.50 466.10,823.08 467.90,822.80 469.70,822.18 471.50,822.74 473.30,822.19 475.10,822.91 476.90,822.71 477.80,823.09 478.45,815.00 478.75,815.00 479.40,822.61 480.00,823.08 480.85,797.50 481.15,797.50 482.00,822.60 483.80,823.57 485.60,823.01 487.40,822.07 489.20,823.29 491.00,822.44 492.80,822.58 494.60,822.23 496.40,823.34 498.20,822.14 500.00,823.18 501.80,822.63 501.90,822.94 502.75,820.00 503.05,820.00 503.90,822.63 505.70,822.13 507.50,823.46 509.30,823.05 511.10,822.27 512.90,823.56 514.70,823.46 516.50,822.29 518.30,822.03 520.10,822.98 521.90,822.22 523.70,823.17 525.50,822.75 527.30,823.13 529.10,822.91 530.90,823.23 531.80,823.06 532.65,819.50 532.95,819.50 533.80,822.88 535.60,823.63 537.40,823.55 539.20,823.49 541.00,823.48 542.80,823.71 544.60,823.51 546.40,823.58 548.20,823.55 550.00,823.64 551.80,823.61 553.60,823.71 555.40,823.58 555.70,823.58 556.35,835.00 556.65,835.00 557.30,823.62 557.90,823.64 558.45,829.00 558.75,829.00 559.30,823.66 559.20,823.57 559.85,838.00 560.15,838.00 560.80,823.66 562.60,823.74 562.70,823.67 563.35,837.00 563.65,837.00 564.30,823.54 564.10,823.58 564.95,820.00 565.25,820.00 566.10,823.64 567.90,823.70 569.70,823.46 571.50,823.57 573.30,823.67 575.10,823.68 576.90,823.61 578.70,823.51 580.50,823.57 582.30,823.47 584.10,823.54 585.90,823.58 587.70,823.70 589.50,823.63 591.30,823.57 592.10,823.56 593.05,838.60 593.35,838.60 594.30,823.57 596.10,823.65 597.90,823.58 599.70,823.50 601.50,823.70 603.10,823.61 604.05,840.00 604.35,840.00 605.30,823.67 606.30,823.61 606.85,832.00 607.15,832.00 607.70,823.62 609.50,823.59 610.25,840.00 610.55,840.00 611.30,823.62 611.80,823.66 612.35,820.00 612.65,820.00 613.20,823.67 612.80,823.62 613.35,838.00 613.65,838.00 614.20,823.59 614.90,823.53 615.45,839.00 615.75,839.00 616.30,823.65 617.20,823.60" fill="none" stroke="#3274D9" stroke-width="2.0" stroke-linejoin="round" stroke-opacity="1.0"/><polyline points="135.60,859.00 137.60,751.50 138.00,751.50 140.00,859.00" fill="none" stroke="#FFF899" stroke-width="2.0" stroke-linejoin="round" stroke-opacity="1.0"/><polyline points="216.30,857.00 217.60,831.00 218.20,831.00 219.50,857.00" fill="none" stroke="#FFF899" stroke-width="2.0" stroke-linejoin="round" stroke-opacity="1.0"/><polyline points="225.70,857.00 226.90,853.60 228.10,857.00" fill="none" stroke="#E0B400" stroke-width="1.4" stroke-linejoin="round" stroke-opacity="1.0"/><polyline points="234.70,857.00 235.90,853.60 237.10,857.00" fill="none" stroke="#E0B400" stroke-width="1.4" stroke-linejoin="round" stroke-opacity="1.0"/><rect x="146.6" y="820" width="3.2" height="44" fill="#181b1f"/></svg><div class="a" style="left:17.00px;top:882.00px;width:599.00px;height:71.50px;overflow:hidden"><div class="t" style="left:38.50px;top:5.80px;font-size:12.4px;letter-spacing:0.450px;color:#6e9fff;">Name</div><div class="t" style="left:478.34px;top:5.80px;font-size:12.4px;letter-spacing:0.450px;color:#6e9fff;">Mean</div><svg class="a" style="left:511.20px;top:5.50px;" width="12" height="12" viewBox="0 0 12 12"><polyline points="3.8,5.3 6,7.3 8.2,5.3" fill="none" stroke="#6e9fff" stroke-width="1.25" stroke-linecap="round" stroke-linejoin="round"/></svg><div class="t" style="left:577.28px;top:5.80px;font-size:12.4px;letter-spacing:0.450px;color:#6e9fff;">Max</div><div class="a" style="left:8.20px;top:23.70px;width:590.80px;height:1.00px;background:rgba(204,204,220,0.12);"></div><div class="a" style="left:15.80px;top:34.00px;width:14.20px;height:4.00px;background:#3274D9;border-radius:2px;"></div><div class="t" style="left:38.50px;top:29.80px;font-size:12.4px;letter-spacing:0.381px;">gitlab-gitlab-webservice-default-8181@kubernetes</div><div class="t" style="left:472.16px;top:29.80px;font-size:12.4px;letter-spacing:0.450px;">0.745 req/s</div><div class="t" style="left:570.82px;top:29.80px;font-size:12.4px;letter-spacing:0.450px;">1.26</div><div class="a" style="left:8.20px;top:46.90px;width:590.80px;height:1.00px;background:rgba(204,204,220,0.12);"></div><div class="a" style="left:15.80px;top:57.20px;width:14.20px;height:4.00px;background:#FFF899;border-radius:2px;"></div><div class="t" style="left:38.50px;top:53.00px;font-size:12.4px;letter-spacing:0.508px;">unifi-unifi-8443@kubernetes</div><div class="t" style="left:464.81px;top:53.00px;font-size:12.4px;letter-spacing:0.450px;">0.0760 req/s</div><div class="t" style="left:570.82px;top:53.00px;font-size:12.4px;letter-spacing:0.450px;">2.20</div><div class="a" style="left:8.20px;top:70.10px;width:590.80px;height:1.00px;background:rgba(204,204,220,0.12);"></div><div class="a" style="left:15.80px;top:80.40px;width:14.20px;height:4.00px;background:#C4162A;border-radius:2px;"></div><div class="t" style="left:38.50px;top:76.20px;font-size:12.4px;letter-spacing:0.450px;">traefik-dashboard@internal</div><div class="t" style="left:464.81px;top:76.20px;font-size:12.4px;letter-spacing:0.450px;">0.0330 req/s</div><div class="t" style="left:563.48px;top:76.20px;font-size:12.4px;letter-spacing:0.450px;">0.667</div></div><div class="a" style="left:616.40px;top:883.20px;width:9.60px;height:82.40px;background:#2c2c2c;"></div><svg class="a" style="left:616.40px;top:883.20px;" width="10" height="10" viewBox="0 0 10 10"><polygon points="1.9,7.0 4.8,3.9 7.7,7.0" fill="#a3a3a3"/></svg><svg class="a" style="left:616.40px;top:946.50px;" width="10" height="10" viewBox="0 0 10 10"><polygon points="1.9,3.0 4.8,6.1 7.7,3.0" fill="#a3a3a3"/></svg><div class="a" style="left:618.30px;top:895.00px;width:5.80px;height:11.70px;background:#a0a0a0;border-radius:2.9px;"></div><div class="a" style="left:25.20px;top:955.80px;width:591.20px;height:10.00px;background:#2c2c2c;"></div><svg class="a" style="left:25.20px;top:955.80px;" width="10" height="10" viewBox="0 0 10 10"><polygon points="6.4,1.8 3.2,5 6.4,8.2" fill="#a3a3a3"/></svg><svg class="a" style="left:606.40px;top:955.80px;" width="10" height="10" viewBox="0 0 10 10"><polygon points="3.6,1.8 6.8,5 3.6,8.2" fill="#a3a3a3"/></svg><div class="a" style="left:36.80px;top:957.80px;width:532.20px;height:6.00px;background:#a0a0a0;border-radius:3px;"></div><div class="a" style="left:718.70px;top:860.00px;width:526.80px;height:1.00px;background:rgba(204,204,220,0.1);"></div><div class="a" style="left:718.70px;top:846.00px;width:526.80px;height:1.00px;background:rgba(204,204,220,0.1);"></div><div class="a" style="left:718.70px;top:831.00px;width:526.80px;height:1.00px;background:rgba(204,204,220,0.1);"></div><div class="a" style="left:718.70px;top:815.00px;width:526.80px;height:1.00px;background:rgba(204,204,220,0.1);"></div><div class="a" style="left:718.70px;top:800.00px;width:526.80px;height:1.00px;background:rgba(204,204,220,0.1);"></div><div class="a" style="left:718.70px;top:785.00px;width:526.80px;height:1.00px;background:rgba(204,204,220,0.1);"></div><div class="a" style="left:718.70px;top:770.00px;width:526.80px;height:1.00px;background:rgba(204,204,220,0.1);"></div><div class="a" style="left:718.70px;top:754.00px;width:526.80px;height:1.00px;background:rgba(204,204,220,0.1);"></div><div class="a" style="left:718.70px;top:739.00px;width:526.80px;height:1.00px;background:rgba(204,204,220,0.1);"></div><div class="a" style="left:744.00px;top:736.40px;width:1.00px;height:128.60px;background:rgba(204,204,220,0.1);"></div><div class="a" style="left:894.00px;top:736.40px;width:1.00px;height:128.60px;background:rgba(204,204,220,0.1);"></div><div class="a" style="left:1044.00px;top:736.40px;width:1.00px;height:128.60px;background:rgba(204,204,220,0.1);"></div><div class="a" style="left:1194.00px;top:736.40px;width:1.00px;height:128.60px;background:rgba(204,204,220,0.1);"></div><div class="t" style="left:674.49px;top:853.80px;font-size:12.4px;letter-spacing:0.350px;">0 req/s</div><div class="t" style="left:656.21px;top:839.80px;font-size:12.4px;letter-spacing:0.350px;">0.05 req/s</div><div class="t" style="left:663.45px;top:824.80px;font-size:12.4px;letter-spacing:0.350px;">0.1 req/s</div><div class="t" style="left:656.21px;top:808.80px;font-size:12.4px;letter-spacing:0.350px;">0.15 req/s</div><div class="t" style="left:663.45px;top:793.80px;font-size:12.4px;letter-spacing:0.350px;">0.2 req/s</div><div class="t" style="left:656.21px;top:778.80px;font-size:12.4px;letter-spacing:0.350px;">0.25 req/s</div><div class="t" style="left:663.45px;top:763.80px;font-size:12.4px;letter-spacing:0.350px;">0.3 req/s</div><div class="t" style="left:656.21px;top:747.80px;font-size:12.4px;letter-spacing:0.350px;">0.35 req/s</div><div class="t" style="left:663.45px;top:732.80px;font-size:12.4px;letter-spacing:0.350px;">0.4 req/s</div><div class="t" style="left:728.29px;top:870.30px;font-size:12.4px;letter-spacing:0.350px;">03/19</div><div class="t" style="left:878.29px;top:870.30px;font-size:12.4px;letter-spacing:0.350px;">03/21</div><div class="t" style="left:1028.29px;top:870.30px;font-size:12.4px;letter-spacing:0.350px;">03/23</div><div class="t" style="left:1178.29px;top:870.30px;font-size:12.4px;letter-spacing:0.350px;">03/25</div><svg class="a" style="left:715.00px;top:730.00px;" width="535.00" height="135.00" viewBox="715.00 730.00 535.00 135.00"><path d="M719.00,848.00 L720.50,860.00 L720.50,861.00 L719.00,861.00 Z" fill="#B877D9" fill-opacity="0.1"/><path d="M742.26,859.81 L743.74,850.93 L746.70,848.70 L748.93,844.26 L750.41,848.70 L753.37,850.93 L757.07,849.44 L760.04,852.41 L763.00,850.19 L765.96,851.67 L768.93,847.96 L771.15,843.52 L774.11,845.74 L777.07,842.04 L779.30,843.52 L780.78,850.93 L781.52,859.81 L781.52,861.00 L742.26,861.00 Z" fill="#B877D9" fill-opacity="0.1"/><polyline points="719.20,848.50 720.80,860.50" fill="none" stroke="#B877D9" stroke-width="1.6" stroke-linejoin="round" stroke-opacity="1.0"/><polyline points="742.26,859.81 743.74,850.93 746.70,848.70 748.93,844.26 750.41,848.70 753.37,850.93 757.07,849.44 760.04,852.41 763.00,850.19 765.96,851.67 768.93,847.96 771.15,843.52 774.11,845.74 777.07,842.04 779.30,843.52 780.78,850.93 781.52,859.81" fill="none" stroke="#B877D9" stroke-width="1.8" stroke-linejoin="round" stroke-opacity="1.0"/><polyline points="719.00,861.00 773.00,861.00" fill="none" stroke="#F2CC0C" stroke-width="2.0" stroke-linejoin="round" stroke-opacity="1.0"/><polygon points="797.20,860.50 797.20,848.50 798.50,848.84 799.80,848.61 801.10,848.97 802.40,848.61 803.70,848.40 805.00,848.44 806.30,849.02 807.60,848.12 808.90,845.72 810.20,848.73 811.50,848.89 812.80,848.48 814.10,846.46 815.40,848.10 816.70,848.96 818.00,847.87 819.30,848.04 820.60,847.71 821.90,848.13 823.20,844.57 824.50,848.92 825.80,848.48 827.10,845.13 828.40,847.78 829.70,847.98 831.00,848.62 832.30,848.36 833.60,848.45 834.90,845.46 836.20,848.23 837.50,847.86 838.80,847.72 840.10,848.32 841.40,848.94 842.70,847.93 844.00,844.67 845.30,848.54 846.60,848.35 847.90,848.41 849.20,848.93 850.50,845.29 851.80,848.82 853.10,847.85 854.40,848.70 855.70,848.10 857.00,848.76 858.30,848.86 859.60,848.83 860.90,848.92 862.20,848.52 863.50,848.89 864.80,848.71 866.10,847.83 867.40,848.52 868.70,847.98 870.00,846.35 871.30,848.78 872.60,849.09 873.90,847.71 875.20,848.28 876.50,848.84 877.80,846.06 879.10,848.81 880.40,847.86 881.70,848.82 883.00,848.91 884.30,848.76 885.60,846.22 886.90,848.57 888.20,847.88 889.50,848.17 890.80,848.33 892.10,847.81 893.40,845.33 894.70,847.88 896.00,848.46 897.30,848.59 898.60,845.17 899.90,848.21 901.20,848.13 902.50,847.71 903.80,848.24 905.10,848.71 906.40,847.76 907.70,849.07 909.00,847.86 910.30,848.60 911.60,848.16 912.90,847.76 914.20,848.81 915.50,848.81 916.80,845.75 918.10,847.96 919.40,848.94 920.70,848.84 922.00,848.72 923.30,848.58 924.60,848.64 925.90,848.82 927.20,846.04 928.50,847.92 929.80,847.75 931.10,848.24 932.40,847.95 933.70,844.77 935.00,848.43 936.30,848.98 937.60,847.83 938.90,849.09 940.20,848.44 941.50,848.52 942.80,849.09 944.10,848.41 945.40,848.46 946.70,848.10 948.00,848.98 949.30,848.06 950.60,848.90 951.90,848.86 953.20,848.93 954.50,847.97 955.80,848.85 957.10,848.54 958.40,849.01 959.70,845.13 961.00,848.47 962.30,848.85 963.60,848.57 964.90,848.16 966.20,848.19 967.50,847.86 968.80,845.93 970.10,847.79 971.40,848.14 972.70,848.31 974.00,848.20 975.30,844.53 976.60,848.47 977.90,848.64 979.20,845.36 980.50,848.17 981.80,849.05 983.10,847.88 984.40,848.83 985.70,848.12 987.00,848.16 988.30,848.14 989.60,847.79 990.90,848.52 992.20,848.91 993.50,848.62 994.80,847.93 996.10,848.10 997.40,848.45 998.70,848.59 1000.00,847.72 1001.30,847.97 1002.60,848.71 1003.90,848.14 1005.20,848.19 1006.50,847.94 1007.80,847.82 1009.10,848.74 1010.40,848.77 1011.70,848.26 1013.00,848.61 1014.30,848.70 1015.60,849.01 1016.90,848.93 1018.20,848.23 1019.50,848.21 1020.80,848.93 1022.10,848.97 1023.40,848.40 1024.70,848.59 1026.00,848.20 1027.30,848.76 1028.60,847.99 1029.90,847.86 1031.20,848.86 1032.50,844.92 1033.80,848.47 1035.10,848.39 1036.40,848.20 1037.70,844.90 1039.00,848.19 1040.30,847.98 1041.60,849.09 1042.90,848.28 1044.20,848.70 1045.50,848.48 1046.80,847.84 1048.10,848.25 1049.40,848.21 1050.70,845.17 1052.00,846.33 1053.30,845.56 1054.60,847.94 1055.90,849.02 1057.20,848.26 1058.50,845.30 1059.80,848.83 1061.10,848.71 1062.40,848.23 1063.70,848.85 1065.00,848.92 1066.30,848.18 1067.60,845.12 1068.90,848.22 1070.20,847.96 1071.50,846.10 1072.80,849.02 1074.10,844.94 1075.40,847.93 1076.70,848.48 1078.00,848.62 1078.80,848.00 1079.60,860.50" fill="#B877D9"/><polyline points="783.20,860.00 784.50,848.00 785.60,852.00 786.90,830.30 788.20,850.00 789.30,846.00 790.40,855.00 791.50,847.00 792.60,858.00 793.80,849.00 795.20,859.00 797.20,848.00" fill="none" stroke="#B877D9" stroke-width="1.6" stroke-linejoin="round" stroke-opacity="1.0"/><path d="M783.20,860.00 L784.50,848.00 L785.60,852.00 L786.90,830.30 L788.20,850.00 L789.30,846.00 L790.40,855.00 L791.50,847.00 L792.60,858.00 L793.80,849.00 L795.20,859.00 L797.20,848.00 L797.20,861.00 L783.20,861.00 Z" fill="#B877D9" fill-opacity="0.25"/><polygon points="1087.80,860.50 1089.60,857.00 1090.40,857.00 1092.20,860.50" fill="#B877D9"/><polygon points="1108.00,860.50 1109.40,849.20 1110.20,849.20 1111.60,860.50" fill="#B877D9"/><polygon points="1146.80,860.50 1147.60,855.50 1148.40,855.50 1149.20,860.50" fill="#B877D9"/><polygon points="1158.50,860.50 1159.60,855.50 1160.40,855.50 1161.50,860.50" fill="#B877D9"/><polygon points="1169.20,860.50 1170.60,855.50 1171.40,855.50 1172.80,860.50" fill="#B877D9"/><polygon points="1182.50,860.50 1183.60,855.00 1184.40,855.00 1185.50,860.50" fill="#B877D9"/><polygon points="1188.20,860.50 1189.60,855.00 1190.40,855.00 1191.80,860.50" fill="#B877D9"/><polygon points="1218.50,860.50 1219.60,857.50 1220.40,857.50 1221.50,860.50" fill="#B877D9"/><polygon points="1228.20,860.50 1229.60,855.00 1230.40,855.00 1231.80,860.50" fill="#B877D9"/><polygon points="1238.00,860.50 1239.10,855.00 1239.90,855.00 1241.00,860.50" fill="#B877D9"/><polyline points="719.93,833.73 721.22,831.13 722.78,833.73 724.08,836.32 725.37,837.62 726.67,860.31" fill="none" stroke="#37872D" stroke-width="2.0" stroke-linejoin="round" stroke-opacity="1.0"/><polyline points="770.11,860.31 771.01,837.62 772.70,838.27 774.64,833.73 776.59,832.43 777.88,837.62 779.18,860.31" fill="none" stroke="#37872D" stroke-width="2.0" stroke-linejoin="round" stroke-opacity="1.0"/><polyline points="720.19,860.96 722.13,860.31 722.78,821.41 723.30,821.41 723.82,860.31 727.97,860.31 729.26,859.66 729.78,748.15 730.17,748.15 730.69,859.66 732.50,860.31" fill="none" stroke="#5794F2" stroke-width="2.0" stroke-linejoin="round" stroke-opacity="1.0"/><polyline points="770.11,860.31 771.14,828.54 772.05,825.95 773.09,828.54 774.00,860.31" fill="none" stroke="#1F60C4" stroke-width="2.0" stroke-linejoin="round" stroke-opacity="1.0"/><polyline points="773.00,860.90 1243.90,860.90" fill="none" stroke="#1F60C4" stroke-width="2.0" stroke-linejoin="round" stroke-opacity="1.0"/><polyline points="849.40,860.50 850.50,839.20 851.10,839.20 852.30,860.50" fill="none" stroke="#1F60C4" stroke-width="1.8" stroke-linejoin="round" stroke-opacity="1.0"/><polyline points="1080.00,860.00 1081.00,857.00 1082.00,860.00" fill="none" stroke="#1F60C4" stroke-width="1.4" stroke-linejoin="round" stroke-opacity="1.0"/><polyline points="783.20,861.00 795.00,861.00" fill="none" stroke="#F2495C" stroke-width="1.6" stroke-linejoin="round" stroke-opacity="1.0"/><rect x="781.2" y="835" width="1.9" height="28" fill="#181b1f"/></svg><div class="a" style="left:644.33px;top:882.00px;width:598.67px;height:71.50px;overflow:hidden"><div class="t" style="left:37.97px;top:5.80px;font-size:12.4px;letter-spacing:0.450px;color:#6e9fff;">Name</div><div class="t" style="left:470.51px;top:5.80px;font-size:12.4px;letter-spacing:0.450px;color:#6e9fff;">Mean</div><svg class="a" style="left:503.37px;top:5.50px;" width="12" height="12" viewBox="0 0 12 12"><polyline points="3.8,5.3 6,7.3 8.2,5.3" fill="none" stroke="#6e9fff" stroke-width="1.25" stroke-linecap="round" stroke-linejoin="round"/></svg><div class="t" style="left:577.15px;top:5.80px;font-size:12.4px;letter-spacing:0.450px;color:#6e9fff;">Max</div><div class="a" style="left:7.87px;top:23.70px;width:590.80px;height:1.00px;background:rgba(204,204,220,0.12);"></div><div class="a" style="left:15.37px;top:34.00px;width:14.20px;height:4.00px;background:#5794F2;border-radius:2px;"></div><div class="t" style="left:37.97px;top:29.80px;font-size:12.4px;letter-spacing:0.503px;">gitlab-gitlab-minio-svc-9000@kubernetes</div><div class="t" style="left:464.78px;top:29.80px;font-size:12.4px;letter-spacing:0.450px;">0.0512 req/s</div><div class="t" style="left:563.25px;top:29.80px;font-size:12.4px;letter-spacing:0.450px;">0.367</div><div class="a" style="left:7.87px;top:46.90px;width:590.80px;height:1.00px;background:rgba(204,204,220,0.12);"></div><div class="a" style="left:15.37px;top:57.20px;width:14.20px;height:4.00px;background:#B877D9;border-radius:2px;"></div><div class="t" style="left:37.97px;top:53.00px;font-size:12.4px;letter-spacing:0.385px;">gitlab-gitlab-webservice-default-8181@kubernetes</div><div class="t" style="left:464.78px;top:53.00px;font-size:12.4px;letter-spacing:0.450px;">0.0156 req/s</div><div class="t" style="left:563.25px;top:53.00px;font-size:12.4px;letter-spacing:0.450px;">0.100</div><div class="a" style="left:7.87px;top:70.10px;width:590.80px;height:1.00px;background:rgba(204,204,220,0.12);"></div><div class="a" style="left:15.37px;top:80.40px;width:14.20px;height:4.00px;background:#37872D;border-radius:2px;"></div><div class="t" style="left:37.97px;top:76.20px;font-size:12.4px;letter-spacing:0.450px;">gitlab-gitlab-registry@kubernetes</div><div class="t" style="left:457.43px;top:76.20px;font-size:12.4px;letter-spacing:0.450px;">0.00520 req/s</div><div class="t" style="left:555.89px;top:76.20px;font-size:12.4px;letter-spacing:0.450px;">0.0833</div></div><div class="a" style="left:1243.40px;top:883.20px;width:9.60px;height:82.40px;background:#2c2c2c;"></div><svg class="a" style="left:1243.40px;top:883.20px;" width="10" height="10" viewBox="0 0 10 10"><polygon points="1.9,7.0 4.8,3.9 7.7,7.0" fill="#a3a3a3"/></svg><svg class="a" style="left:1243.40px;top:946.50px;" width="10" height="10" viewBox="0 0 10 10"><polygon points="1.9,3.0 4.8,6.1 7.7,3.0" fill="#a3a3a3"/></svg><div class="a" style="left:1245.30px;top:895.30px;width:5.80px;height:14.30px;background:#a0a0a0;border-radius:2.9px;"></div><div class="a" style="left:652.20px;top:955.80px;width:591.20px;height:10.00px;background:#2c2c2c;"></div><svg class="a" style="left:652.20px;top:955.80px;" width="10" height="10" viewBox="0 0 10 10"><polygon points="6.4,1.8 3.2,5 6.4,8.2" fill="#a3a3a3"/></svg><svg class="a" style="left:1233.40px;top:955.80px;" width="10" height="10" viewBox="0 0 10 10"><polygon points="3.6,1.8 6.8,5 3.6,8.2" fill="#a3a3a3"/></svg><div class="a" style="left:663.60px;top:957.80px;width:530.90px;height:6.00px;background:#a0a0a0;border-radius:3px;"></div><div class="a" style="left:1305.90px;top:859.00px;width:566.60px;height:1.00px;background:rgba(204,204,220,0.1);"></div><div class="a" style="left:1305.90px;top:838.00px;width:566.60px;height:1.00px;background:rgba(204,204,220,0.1);"></div><div class="a" style="left:1305.90px;top:816.00px;width:566.60px;height:1.00px;background:rgba(204,204,220,0.1);"></div><div class="a" style="left:1305.90px;top:793.00px;width:566.60px;height:1.00px;background:rgba(204,204,220,0.1);"></div><div class="a" style="left:1305.90px;top:770.00px;width:566.60px;height:1.00px;background:rgba(204,204,220,0.1);"></div><div class="a" style="left:1305.90px;top:747.00px;width:566.60px;height:1.00px;background:rgba(204,204,220,0.1);"></div><div class="a" style="left:1331.00px;top:736.40px;width:1.00px;height:127.60px;background:rgba(204,204,220,0.1);"></div><div class="a" style="left:1493.00px;top:736.40px;width:1.00px;height:127.60px;background:rgba(204,204,220,0.1);"></div><div class="a" style="left:1655.00px;top:736.40px;width:1.00px;height:127.60px;background:rgba(204,204,220,0.1);"></div><div class="a" style="left:1817.00px;top:736.40px;width:1.00px;height:127.60px;background:rgba(204,204,220,0.1);"></div><div class="t" style="left:1283.56px;top:852.80px;font-size:12.4px;letter-spacing:0.350px;">0 s</div><div class="t" style="left:1283.56px;top:831.80px;font-size:12.4px;letter-spacing:0.350px;">1 s</div><div class="t" style="left:1283.56px;top:809.80px;font-size:12.4px;letter-spacing:0.350px;">2 s</div><div class="t" style="left:1283.56px;top:786.80px;font-size:12.4px;letter-spacing:0.350px;">3 s</div><div class="t" style="left:1283.56px;top:763.80px;font-size:12.4px;letter-spacing:0.350px;">4 s</div><div class="t" style="left:1283.56px;top:740.80px;font-size:12.4px;letter-spacing:0.350px;">5 s</div><div class="t" style="left:1315.29px;top:870.00px;font-size:12.4px;letter-spacing:0.350px;">03/19</div><div class="t" style="left:1477.29px;top:870.00px;font-size:12.4px;letter-spacing:0.350px;">03/21</div><div class="t" style="left:1639.29px;top:870.00px;font-size:12.4px;letter-spacing:0.350px;">03/23</div><div class="t" style="left:1801.29px;top:870.00px;font-size:12.4px;letter-spacing:0.350px;">03/25</div><svg class="a" style="left:1300.00px;top:730.00px;" width="580.00" height="135.00" viewBox="1300.00 730.00 580.00 135.00"><polyline points="1306.00,860.70 1871.00,860.70" fill="none" stroke="#A07060" stroke-width="1.2" stroke-linejoin="round" stroke-opacity="1.0"/><polyline points="1306.00,859.10 1378.75,859.10" fill="none" stroke="#A352CC" stroke-width="2.4" stroke-linejoin="round" stroke-opacity="1.0"/><polyline points="1378.75,859.10 1871.00,859.10" fill="none" stroke="#C8DCFF" stroke-width="2.6" stroke-linejoin="round" stroke-opacity="1.0"/><polygon points="1308.75,860.00 1311.00,856.50 1315.00,855.60 1317.00,855.50 1318.20,855.00 1319.00,849.40 1320.00,849.40 1321.00,855.60 1322.50,860.00" fill="#C4162A"/><polygon points="1336.80,860.00 1338.50,803.75 1339.50,803.75 1341.20,860.00" fill="#C4162A"/><polygon points="1778.90,860.00 1780.30,840.00 1781.30,840.00 1782.70,860.00" fill="#C4162A"/><polygon points="1648.00,860.00 1649.50,797.00 1650.30,797.00 1651.80,860.00" fill="#3274D9"/><polygon points="1373.20,860.00 1374.20,823.10 1375.00,823.10 1376.00,860.00" fill="#3274D9"/><polygon points="1724.50,860.00 1725.30,851.70 1726.10,851.70 1726.90,860.00" fill="#3274D9"/><polygon points="1367.00,859.00 1368.50,855.00 1372.00,855.00 1377.00,855.50 1378.50,859.00" fill="#3274D9"/><polygon points="1362.30,859.00 1363.00,746.50 1364.00,746.50 1364.70,859.00" fill="#FFF899"/><polygon points="1686.40,859.00 1687.30,768.80 1688.50,768.80 1689.40,859.00" fill="#C8DCFF"/><polyline points="1816.90,747.00 1816.90,858.00" fill="none" stroke="#E0B400" stroke-width="1.0" stroke-linejoin="round" stroke-opacity="0.35"/><rect x="1816" y="746" width="1.8" height="1.8" fill="#E0B400"/><rect x="1372.4" y="852" width="1.6" height="10" fill="#181b1f"/><rect x="1387.5" y="856" width="1.4" height="6" fill="#181b1f"/></svg><div class="a" style="left:1271.67px;top:882.00px;width:598.67px;height:84.00px;overflow:hidden"><div class="t" style="left:37.73px;top:6.00px;font-size:12.4px;letter-spacing:0.450px;color:#6e9fff;">Name</div><div class="t" style="left:486.37px;top:6.00px;font-size:12.4px;letter-spacing:0.450px;color:#6e9fff;">Mean</div><svg class="a" style="left:519.23px;top:5.70px;" width="12" height="12" viewBox="0 0 12 12"><polyline points="3.8,5.3 6,7.3 8.2,5.3" fill="none" stroke="#6e9fff" stroke-width="1.25" stroke-linecap="round" stroke-linejoin="round"/></svg><div class="t" style="left:565.41px;top:6.00px;font-size:12.4px;letter-spacing:0.450px;color:#6e9fff;">Max</div><div class="a" style="left:7.63px;top:24.30px;width:590.30px;height:1.00px;background:rgba(204,204,220,0.12);"></div><div class="a" style="left:15.53px;top:34.40px;width:14.20px;height:4.00px;background:#E0B400;border-radius:2px;"></div><div class="t" style="left:37.73px;top:30.20px;font-size:12.4px;letter-spacing:0.432px;">gitlab-gitlab-registry-66b8e6ab2b93c4311696@kubernetescrd</div><div class="t" style="left:490.60px;top:30.20px;font-size:12.4px;letter-spacing:0.450px;">4.54 s</div><div class="t" style="left:572.09px;top:30.20px;font-size:12.4px;letter-spacing:0.450px;">5 s</div><div class="a" style="left:7.63px;top:47.60px;width:590.30px;height:1.00px;background:rgba(204,204,220,0.12);"></div><div class="a" style="left:15.53px;top:57.70px;width:14.20px;height:4.00px;background:#3274D9;border-radius:2px;"></div><div class="t" style="left:37.73px;top:53.50px;font-size:12.4px;letter-spacing:0.394px;">gitlab-gitlab-webservice-default-8181@kubernetes</div><div class="t" style="left:483.72px;top:53.50px;font-size:12.4px;letter-spacing:0.450px;">105 ms</div><div class="t" style="left:553.50px;top:53.50px;font-size:12.4px;letter-spacing:0.450px;">2.82 s</div><div class="a" style="left:7.63px;top:70.90px;width:590.30px;height:1.00px;background:rgba(204,204,220,0.12);"></div><div class="a" style="left:15.53px;top:81.00px;width:14.20px;height:4.00px;background:#FFF899;border-radius:2px;"></div><div class="t" style="left:37.73px;top:76.80px;font-size:12.4px;letter-spacing:0.508px;">unifi-unifi-8443@kubernetes</div><div class="t" style="left:483.72px;top:76.80px;font-size:12.4px;letter-spacing:0.450px;">103 ms</div><div class="t" style="left:572.09px;top:76.80px;font-size:12.4px;letter-spacing:0.450px;">5 s</div></div><div class="a" style="left:1870.60px;top:883.80px;width:9.60px;height:81.90px;background:#2c2c2c;"></div><svg class="a" style="left:1870.60px;top:883.80px;" width="10" height="10" viewBox="0 0 10 10"><polygon points="1.9,7.0 4.8,3.9 7.7,7.0" fill="#a3a3a3"/></svg><svg class="a" style="left:1870.60px;top:955.70px;" width="10" height="10" viewBox="0 0 10 10"><polygon points="1.9,3.0 4.8,6.1 7.7,3.0" fill="#a3a3a3"/></svg><div class="a" style="left:1872.50px;top:895.00px;width:5.80px;height:13.70px;background:#a0a0a0;border-radius:2.9px;"></div><div class="t md" style="left:29.10px;top:350.80px;font-size:14.6px;letter-spacing:0.391px;">Requests/s by Entrypoint</div><svg class="a" style="left:215.90px;top:349.90px;" width="16" height="16" viewBox="0 0 16 16"><circle cx="8" cy="8" r="6.2" fill="none" stroke="rgba(204,204,220,0.65)" stroke-width="1.35"/><rect x="7.3" y="7.0" width="1.4" height="4.0" rx="0.6" fill="rgba(204,204,220,0.65)"/><circle cx="8" cy="5.2" r="0.8" fill="rgba(204,204,220,0.65)"/></svg><div class="t md" style="left:656.00px;top:350.80px;font-size:14.6px;letter-spacing:0.295px;">Requests/s by Status Code</div><svg class="a" style="left:856.00px;top:349.90px;" width="16" height="16" viewBox="0 0 16 16"><circle cx="8" cy="8" r="6.2" fill="none" stroke="rgba(204,204,220,0.65)" stroke-width="1.35"/><rect x="7.3" y="7.0" width="1.4" height="4.0" rx="0.6" fill="rgba(204,204,220,0.65)"/><circle cx="8" cy="5.2" r="0.8" fill="rgba(204,204,220,0.65)"/></svg><div class="t md" style="left:1283.20px;top:350.80px;font-size:14.6px;letter-spacing:0.286px;">Request Duration P50 / P95 / P99</div><svg class="a" style="left:1528.00px;top:349.90px;" width="16" height="16" viewBox="0 0 16 16"><circle cx="8" cy="8" r="6.2" fill="none" stroke="rgba(204,204,220,0.65)" stroke-width="1.35"/><rect x="7.3" y="7.0" width="1.4" height="4.0" rx="0.6" fill="rgba(204,204,220,0.65)"/><circle cx="8" cy="5.2" r="0.8" fill="rgba(204,204,220,0.65)"/></svg><div class="t md" style="left:29.10px;top:692.80px;font-size:14.6px;letter-spacing:0.382px;">Requests/s by Service</div><svg class="a" style="left:198.00px;top:691.90px;" width="16" height="16" viewBox="0 0 16 16"><circle cx="8" cy="8" r="6.2" fill="none" stroke="rgba(204,204,220,0.65)" stroke-width="1.35"/><rect x="7.3" y="7.0" width="1.4" height="4.0" rx="0.6" fill="rgba(204,204,220,0.65)"/><circle cx="8" cy="5.2" r="0.8" fill="rgba(204,204,220,0.65)"/></svg><div class="t md" style="left:656.00px;top:692.80px;font-size:14.6px;letter-spacing:0.222px;">Error Rate by Service</div><svg class="a" style="left:816.00px;top:691.90px;" width="16" height="16" viewBox="0 0 16 16"><circle cx="8" cy="8" r="6.2" fill="none" stroke="rgba(204,204,220,0.65)" stroke-width="1.35"/><rect x="7.3" y="7.0" width="1.4" height="4.0" rx="0.6" fill="rgba(204,204,220,0.65)"/><circle cx="8" cy="5.2" r="0.8" fill="rgba(204,204,220,0.65)"/></svg><div class="t md" style="left:1283.20px;top:692.80px;font-size:14.6px;letter-spacing:0.383px;">Service Latency P95</div><svg class="a" style="left:1440.00px;top:691.90px;" width="16" height="16" viewBox="0 0 16 16"><circle cx="8" cy="8" r="6.2" fill="none" stroke="rgba(204,204,220,0.65)" stroke-width="1.35"/><rect x="7.3" y="7.0" width="1.4" height="4.0" rx="0.6" fill="rgba(204,204,220,0.65)"/><circle cx="8" cy="5.2" r="0.8" fill="rgba(204,204,220,0.65)"/></svg><div class="t md" style="left:29.10px;top:1034.80px;font-size:14.6px;letter-spacing:0.392px;">Ingress Bandwidth by Service</div><svg class="a" style="left:248.00px;top:1033.90px;" width="16" height="16" viewBox="0 0 16 16"><circle cx="8" cy="8" r="6.2" fill="none" stroke="rgba(204,204,220,0.65)" stroke-width="1.35"/><rect x="7.3" y="7.0" width="1.4" height="4.0" rx="0.6" fill="rgba(204,204,220,0.65)"/><circle cx="8" cy="5.2" r="0.8" fill="rgba(204,204,220,0.65)"/></svg><div class="t md" style="left:970.20px;top:1034.80px;font-size:14.6px;letter-spacing:0.343px;">Egress Bandwidth by Service</div><svg class="a" style="left:1185.00px;top:1033.90px;" width="16" height="16" viewBox="0 0 16 16"><circle cx="8" cy="8" r="6.2" fill="none" stroke="rgba(204,204,220,0.65)" stroke-width="1.35"/><rect x="7.3" y="7.0" width="1.4" height="4.0" rx="0.6" fill="rgba(204,204,220,0.65)"/><circle cx="8" cy="5.2" r="0.8" fill="rgba(204,204,220,0.65)"/></svg></div><div id="foot" style=""><div class="a" style="left:0;top:-1050px;width:1905px;height:1080px"><div class="t" style="left:1737.50px;top:1057.85px;font-size:14.3px;letter-spacing:0.365px;color:rgba(204,204,220,0.65);">Powered by</div><svg class="a" style="left:1821.00px;top:1057.00px;" width="16" height="16" viewBox="0 0 16 16"><defs><linearGradient id="gl" x1="0" y1="1" x2="0" y2="0"><stop offset="0" stop-color="#fbc80c"/><stop offset="1" stop-color="#f15b2a"/></linearGradient></defs><path fill="url(#gl)" d="M8,0.6 L9.3,2.3 L11.4,1.9 L11.7,4.0 L13.7,4.8 L12.9,6.8 L14.4,8.3 L12.7,9.6 L13.1,11.7 L11,12 L10.2,14 L8.3,13.1 L6.6,14.5 L5.4,12.7 L3.3,12.8 L3.2,10.7 L1.3,9.8 L2.3,7.9 L1.0,6.2 L2.9,5.2 L2.8,3.1 L4.9,3.0 L5.9,1.1 L7.5,2.4 Z"/><circle cx="8" cy="7.8" r="3.9" fill="#111217"/><path d="M9.8,9.4 A2.6,2.6 0 1 1 9.9,6.3" fill="none" stroke="url(#gl)" stroke-width="1.6"/><circle cx="8.3" cy="7.9" r="0.9" fill="url(#gl)"/></svg><div class="t md" style="left:1838.70px;top:1057.85px;font-size:14.3px;letter-spacing:-0.197px;color:#d8d9da;">Grafana</div></div></div><div class="a" style="left:1905.00px;top:0.00px;width:15.00px;height:1080.00px;background:#2c2c2c;"></div><svg class="a" style="left:1905.00px;top:0.00px;" width="15" height="16" viewBox="0 0 15 16"><polygon points="3,11 7.5,5.8 12,11" fill="#a3a3a3"/></svg><div class="a" style="left:1908.00px;top:18.00px;width:9.00px;height:633.00px;background:#a0a0a0;border-radius:4.5px;"></div><svg class="a" style="left:1905.00px;top:1064.00px;" width="15" height="16" viewBox="0 0 15 16"><polygon points="3,4 7.5,9.2 12,4" fill="#a3a3a3"/></svg></body></html>
